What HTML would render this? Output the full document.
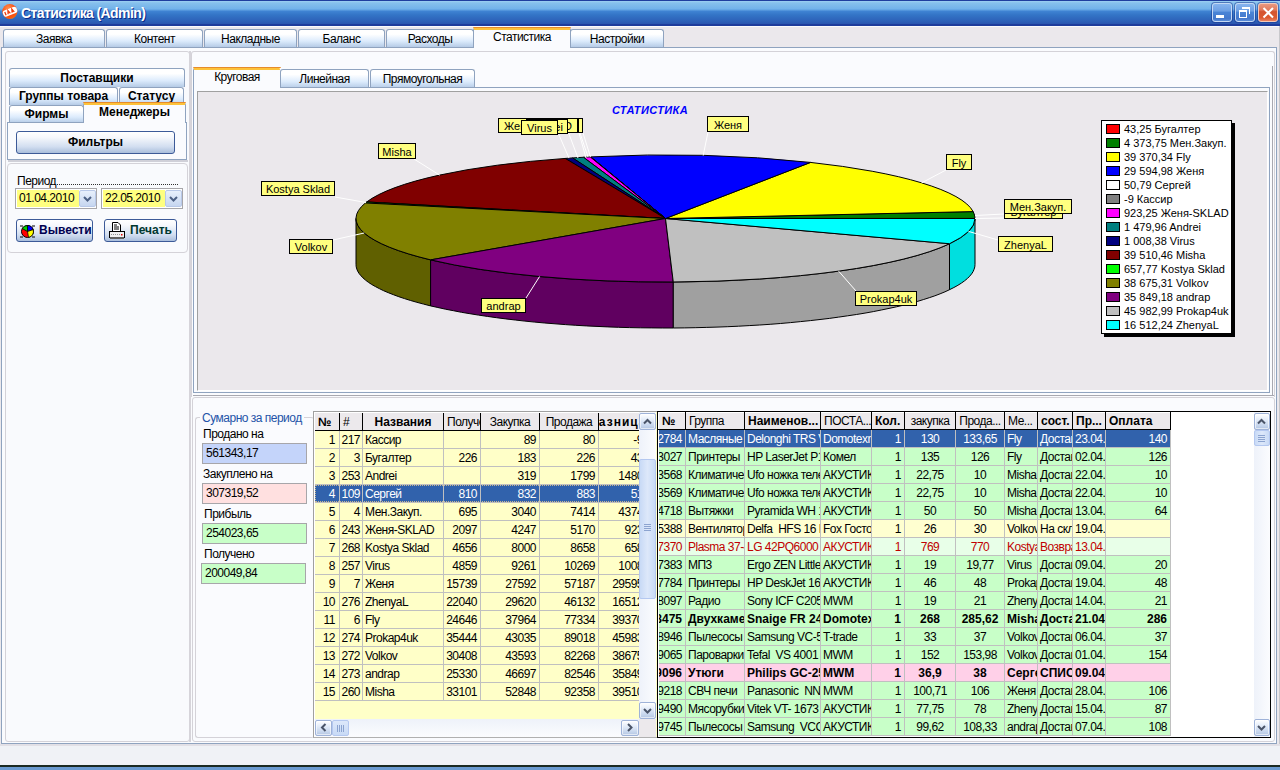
<!DOCTYPE html><html><head><meta charset="utf-8"><style>
html,body{margin:0;padding:0;}
body{width:1280px;height:770px;position:relative;overflow:hidden;background:#EBE8EC;font-family:"Liberation Sans", sans-serif;font-size:12px;letter-spacing:-0.5px;color:#000;}
svg{letter-spacing:0;}
div{box-sizing:border-box;}
.tab{position:absolute;border:1px solid #8FA3BF;border-bottom:none;border-radius:3px 3px 0 0;background:linear-gradient(#FFFFFF 0%,#FFFFFF 25%,#DCEBFC 65%,#B5CBE6 100%);text-align:center;font-size:12px;}
.stab{position:absolute;background:#FAFBFE;text-align:center;border-top:3px solid #FDC23A;border-radius:3px 3px 0 0;box-shadow:inset 0 0 0 0 #000;}
.stab::before{content:'';position:absolute;left:-1px;right:-1px;top:-3px;height:1px;background:#E68B2C;border-radius:3px 3px 0 0;}
.btn{position:absolute;letter-spacing:0;border:1px solid #3C5A98;border-radius:3px;background:linear-gradient(#FFFFFF 0%,#F6F8FC 25%,#D2DEF0 70%,#A9BEDC 100%);text-align:center;font-weight:bold;}
.cell{position:absolute;white-space:nowrap;overflow:hidden;}

</style></head><body>
<div style="position:absolute;left:0px;top:0px;width:1280px;height:26px;background:linear-gradient(#1F3E9E 0px,#1F3E9E 1px,#9DD0F2 1px,#86C0EC 3px,#72B2EA 9px,#5C9EE0 10px,#3E82D2 11.5px,#3374C6 15px,#2C5EB6 22px,#2A55AE 24px,#1E3C9C 24.5px,#1E3C9C 26px);"></div>
<svg style="position:absolute;left:0px;top:2px" width="20" height="20" viewBox="0 0 20 20"><defs><radialGradient id="ig" cx="0.4" cy="0.3" r="0.8"><stop offset="0" stop-color="#FF9050"/><stop offset="0.6" stop-color="#F84A10"/><stop offset="0.85" stop-color="#F86010"/><stop offset="1" stop-color="#FFC020"/></radialGradient></defs><circle cx="9.8" cy="9.5" r="7.6" fill="url(#ig)"/><g transform="rotate(-22 9.8 9.5)"><rect x="2.6" y="6.6" width="14.6" height="6.4" rx="2.5" fill="#FFFFFF"/><path d="M5 8 V11.5 M7.2 11.5 L8.4 8 L9.6 11.5 M11.5 11.5 L12.6 8 L13.8 11.5 M11.9 10.4 H13.4" stroke="#F03808" stroke-width="1.3" fill="none"/></g></svg>
<div style="position:absolute;left:21px;top:4px;text-align:left;white-space:nowrap;color:#fff;font-weight:bold;font-size:14px;line-height:18px;letter-spacing:-0.6px;text-shadow:1px 1px 0 #0A2A8A;">Статистика (Admin)</div>
<div style="position:absolute;left:1212px;top:3px;width:20px;height:19px;border-radius:3px;background:linear-gradient(#86B4EE 0%,#6EA0E4 40%,#4A84D6 50%,#4478CC 85%,#5A8CD8 100%);border:1px solid #C4D8F4;box-shadow:0 0 0 1px rgba(20,50,140,0.5);"><div style="position:absolute;left:3px;top:11px;width:8px;height:3px;background:#fff"></div></div>
<div style="position:absolute;left:1235px;top:3px;width:20px;height:19px;border-radius:3px;background:linear-gradient(#86B4EE 0%,#6EA0E4 40%,#4A84D6 50%,#4478CC 85%,#5A8CD8 100%);border:1px solid #C4D8F4;box-shadow:0 0 0 1px rgba(20,50,140,0.5);"><div style="position:absolute;left:6px;top:3px;width:8px;height:7px;border:1px solid #fff;border-top-width:2px;border-left:none;border-bottom:none;"></div><div style="position:absolute;left:3px;top:6px;width:8px;height:8px;border:1px solid #fff;border-top-width:2px;"></div></div>
<div style="position:absolute;left:1258px;top:3px;width:20px;height:19px;border-radius:3px;background:linear-gradient(#E89880 0%,#E07A5C 35%,#D45430 45%,#DC5A30 80%,#E88060 100%);border:1px solid #F4C8B8;box-shadow:0 0 0 1px rgba(20,50,140,0.5);"><svg width="18" height="17" style="position:absolute;left:0;top:0"><path d="M4.5 4 L14 13.5 M14 4 L4.5 13.5" stroke="#fff" stroke-width="2"/></svg></div>
<div style="position:absolute;left:0px;top:26px;width:1280px;height:1px;background:#FAFAFC;"></div>
<div style="position:absolute;left:1279px;top:26px;width:1px;height:744px;background:#C8C8CC;"></div>
<div class="tab" style="left:3px;top:29px;width:102px;height:18px;line-height:19px;">Заявка</div>
<div class="tab" style="left:106px;top:29px;width:97px;height:18px;line-height:19px;">Контент</div>
<div class="tab" style="left:204px;top:29px;width:93px;height:18px;line-height:19px;">Накладные</div>
<div class="tab" style="left:298px;top:29px;width:87px;height:18px;line-height:19px;">Баланс</div>
<div class="tab" style="left:386px;top:29px;width:88px;height:18px;line-height:19px;">Расходы</div>
<div class="stab" style="left:473px;top:27px;width:98px;height:21px;line-height:15px;border-left:1px solid #8FA3BF;border-right:1px solid #8FA3BF;">Статистика</div>
<div class="tab" style="left:570px;top:29px;width:94px;height:18px;line-height:19px;">Настройки</div>
<div style="position:absolute;left:1px;top:47px;width:1276px;height:697px;border:1px solid #8FA3BF;border-top:1px solid #8FA3BF;background:#FAFBFE;"></div>
<div style="position:absolute;left:474px;top:47px;width:96px;height:1px;background:#FAFBFE;"></div>
<div style="position:absolute;left:0px;top:744px;width:1280px;height:2px;background:#E2E0E6;"></div>
<div style="position:absolute;left:0px;top:746px;width:1280px;height:19px;background:#F0F2F6;"></div>
<div style="position:absolute;left:0px;top:765px;width:1280px;height:2px;background:#1A2A22;"></div>
<div style="position:absolute;left:0px;top:767px;width:1280px;height:3px;background:#6A9AD0;"></div>
<div style="position:absolute;left:5px;top:51px;width:185px;height:691px;border:1px solid #D4D2D8;border-radius:3px;background:#F9FAFD;"></div>
<div class="tab" style="left:9px;top:68px;width:176px;height:19px;line-height:18px;font-weight:bold;font-size:12px;letter-spacing:0;">Поставщики</div>
<div class="tab" style="left:9px;top:87px;width:109px;height:18px;line-height:17px;font-weight:bold;font-size:12px;letter-spacing:0;">Группы товара</div>
<div class="tab" style="left:119px;top:87px;width:65px;height:18px;line-height:17px;font-weight:bold;font-size:12px;letter-spacing:0;">Статусу</div>
<div class="tab" style="left:9px;top:105px;width:75px;height:18px;line-height:17px;font-weight:bold;font-size:12px;letter-spacing:0;">Фирмы</div>
<div style="position:absolute;left:7px;top:122px;width:180px;height:38px;border:1px solid #8FA3BF;border-top:1px solid #8FA3BF;background:#FAFBFE;"></div>
<div style="position:absolute;left:8px;top:160px;width:180px;height:2px;background:#D0D0D8;"></div>
<div class="stab" style="left:83px;top:102px;width:103px;height:21px;line-height:15px;font-weight:bold;font-size:12px;letter-spacing:0;border-left:1px solid #8FA3BF;border-right:1px solid #8FA3BF;">Менеджеры</div>
<div class="btn" style="left:16px;top:131px;width:159px;height:23px;line-height:21px;font-size:12px;">Фильтры</div>
<div style="position:absolute;left:7px;top:163px;width:181px;height:90px;border:1px solid #D4D2D8;border-radius:4px;"></div>
<div style="position:absolute;left:17px;top:174px;text-align:left;white-space:nowrap;font-size:12px;">Период</div>
<div style="position:absolute;left:57px;top:184px;width:121px;height:1px;border-top:1px dotted #303030;"></div>
<div style="position:absolute;left:15px;top:188px;width:82px;height:21px;border:1px solid #A7A6AA;background:#FFFFFF;"><div style="position:absolute;left:1px;top:1px;width:62px;height:17px;background:#FFFF80;"></div><div style="position:absolute;left:3px;top:2px;font-size:12px;line-height:15px;">01.04.2010</div><div style="position:absolute;left:63px;top:1px;width:17px;height:17px;border:1px solid #B8C8E8;border-radius:2px;background:linear-gradient(#E8F0FC,#C6D6F0);"><svg width="15" height="15" style="position:absolute;left:0;top:0"><path d="M4 6 L7.5 9.5 L11 6" stroke="#4D6185" stroke-width="2" fill="none"/></svg></div></div>
<div style="position:absolute;left:101px;top:188px;width:82px;height:21px;border:1px solid #A7A6AA;background:#FFFFFF;"><div style="position:absolute;left:1px;top:1px;width:62px;height:17px;background:#FFFF80;"></div><div style="position:absolute;left:3px;top:2px;font-size:12px;line-height:15px;">22.05.2010</div><div style="position:absolute;left:63px;top:1px;width:17px;height:17px;border:1px solid #B8C8E8;border-radius:2px;background:linear-gradient(#E8F0FC,#C6D6F0);"><svg width="15" height="15" style="position:absolute;left:0;top:0"><path d="M4 6 L7.5 9.5 L11 6" stroke="#4D6185" stroke-width="2" fill="none"/></svg></div></div>
<div class="btn" style="left:16px;top:219px;width:77px;height:23px;line-height:21px;font-size:12px;color:#000050;text-align:left;padding-left:22px;">Вывести</div>
<svg style="position:absolute;left:19px;top:224px" width="17" height="15" viewBox="0 0 17 15"><path d="M1 2 H4 M13 2 H16 M1 13 H4 M13 13 H16" stroke="#000" stroke-width="1"/><circle cx="8.5" cy="7.5" r="6" fill="#FF0000" stroke="#000" stroke-width="1"/><path d="M8.5 7.5 L8.5 1.5 A6 6 0 0 1 14.2 5.6 Z" fill="#0000FF" stroke="#000" stroke-width="0.8"/><path d="M8.5 7.5 L14.2 5.6 A6 6 0 0 1 9.5 13.4 Z" fill="#FFFF00" stroke="#000" stroke-width="0.8"/><path d="M8.5 7.5 L3.2 4.5 A6 6 0 0 1 8.5 1.5 Z" fill="#00D000" stroke="#000" stroke-width="0.8"/></svg>
<div class="btn" style="left:104px;top:219px;width:73px;height:23px;line-height:21px;font-size:12px;color:#003830;text-align:left;padding-left:25px;">Печать</div>
<svg style="position:absolute;left:108px;top:222px" width="18" height="18" viewBox="0 0 18 18"><path d="M4.5 0.5 H10 L12.5 3 V9.5 H4.5 Z" fill="#fff" stroke="#000"/><path d="M6 3 H9 M6 5 H11 M6 7 H11" stroke="#000"/><rect x="1.5" y="9.5" width="15" height="6" fill="#F0F0F0" stroke="#000"/><path d="M3 12.5 H15" stroke="#909090" stroke-dasharray="1 1"/><rect x="13" y="12" width="1.5" height="1.5" fill="#E00000"/><rect x="2" y="15" width="14" height="2" fill="#606060"/></svg>
<div style="position:absolute;left:189px;top:51px;width:2px;height:691px;background:#D6D4DA;"></div>
<div style="position:absolute;left:191px;top:51px;width:1084px;height:346px;border:1px solid #D4D2D8;border-bottom:none;border-radius:3px 3px 0 0;"></div>
<div class="tab" style="left:280px;top:69px;width:89px;height:19px;line-height:18px;">Линейная</div>
<div class="tab" style="left:370px;top:69px;width:105px;height:19px;line-height:18px;">Прямоугольная</div>
<div style="position:absolute;left:193px;top:87px;width:1077px;height:306px;border:1px solid #8FA3BF;background:#FAFBFE;"></div>
<div style="position:absolute;left:1272px;top:66px;width:1px;height:330px;background:#A8A8B0;"></div>
<div style="position:absolute;left:193px;top:395px;width:1081px;height:1px;background:#A8A8B0;"></div>
<div class="stab" style="left:193px;top:67px;width:87px;height:21px;line-height:14px;border-left:1px solid #8FA3BF;">Круговая</div>
<div style="position:absolute;left:197px;top:91px;width:1071px;height:300px;border-top:1px solid #A0A0A0;border-left:1px solid #A0A0A0;border-right:1px solid #FFFFFF;border-bottom:1px solid #FFFFFF;background:#EBE8EC;"></div>
<svg style="position:absolute;left:0;top:0" width="1280" height="400" viewBox="0 0 1280 400"><text x="650" y="114" font-family="Liberation Sans" font-size="11" font-weight="bold" font-style="italic" fill="#0000FF" text-anchor="middle" letter-spacing="0.4">СТАТИСТИКА</text><path d="M356.0 218.5 L356.2 220.8 L356.8 223.0 L357.7 225.2 L359.1 227.5 L360.9 229.7 L363.0 231.9 L365.5 234.1 L368.4 236.3 L371.6 238.4 L375.3 240.5 L379.3 242.6 L383.6 244.7 L388.3 246.7 L393.4 248.7 L398.8 250.7 L404.5 252.6 L410.6 254.5 L416.9 256.3 L423.6 258.1 L430.6 259.9 L430.6 305.9 L423.6 304.1 L416.9 302.3 L410.6 300.5 L404.5 298.6 L398.8 296.7 L393.4 294.7 L388.3 292.7 L383.6 290.7 L379.3 288.6 L375.3 286.5 L371.6 284.4 L368.4 282.3 L365.5 280.1 L363.0 277.9 L360.9 275.7 L359.1 273.5 L357.7 271.2 L356.8 269.0 L356.2 266.8 L356.0 264.5 Z" fill="#606000" stroke="#000" stroke-width="1"/><path d="M430.6 259.9 L437.9 261.5 L445.5 263.2 L453.4 264.7 L461.5 266.3 L469.9 267.7 L478.5 269.1 L487.4 270.4 L496.5 271.7 L505.8 272.9 L515.3 274.0 L524.9 275.1 L534.8 276.1 L544.8 277.0 L555.0 277.8 L565.3 278.6 L575.8 279.3 L586.3 279.9 L597.0 280.4 L607.8 280.9 L618.6 281.3 L629.4 281.6 L640.4 281.8 L651.3 281.9 L662.3 282.0 L673.3 282.0 L673.3 328.0 L662.3 328.0 L651.3 327.9 L640.4 327.8 L629.4 327.6 L618.6 327.3 L607.8 326.9 L597.0 326.4 L586.3 325.9 L575.8 325.3 L565.3 324.6 L555.0 323.8 L544.8 323.0 L534.8 322.1 L524.9 321.1 L515.3 320.0 L505.8 318.9 L496.5 317.7 L487.4 316.4 L478.5 315.1 L469.9 313.7 L461.5 312.3 L453.4 310.7 L445.5 309.2 L437.9 307.5 L430.6 305.9 Z" fill="#600060" stroke="#000" stroke-width="1"/><path d="M673.3 282.0 L684.3 281.9 L695.2 281.7 L706.2 281.4 L717.0 281.1 L727.8 280.7 L738.6 280.2 L749.2 279.6 L759.7 279.0 L770.2 278.3 L780.4 277.5 L790.6 276.6 L800.6 275.6 L810.4 274.6 L820.0 273.5 L829.4 272.4 L838.7 271.1 L847.7 269.8 L856.4 268.5 L865.0 267.1 L873.3 265.6 L881.3 264.0 L889.0 262.4 L896.5 260.8 L903.7 259.1 L910.5 257.3 L917.1 255.5 L923.3 253.6 L929.3 251.7 L934.9 249.8 L940.1 247.8 L945.0 245.8 L949.5 243.7 L949.5 289.7 L945.0 291.8 L940.1 293.8 L934.9 295.8 L929.3 297.7 L923.3 299.6 L917.1 301.5 L910.5 303.3 L903.7 305.1 L896.5 306.8 L889.0 308.4 L881.3 310.0 L873.3 311.6 L865.0 313.1 L856.4 314.5 L847.7 315.8 L838.7 317.1 L829.4 318.4 L820.0 319.5 L810.4 320.6 L800.6 321.6 L790.6 322.6 L780.4 323.5 L770.2 324.3 L759.7 325.0 L749.2 325.6 L738.6 326.2 L727.8 326.7 L717.0 327.1 L706.2 327.4 L695.2 327.7 L684.3 327.9 L673.3 328.0 Z" fill="#A0A0A0" stroke="#000" stroke-width="1"/><path d="M949.5 243.7 L953.9 241.5 L957.9 239.3 L961.4 237.1 L964.6 234.8 L967.4 232.5 L969.7 230.2 L971.6 227.9 L973.1 225.6 L974.1 223.2 L974.8 220.9 L975.0 218.5 L975.0 264.5 L974.8 266.9 L974.1 269.2 L973.1 271.6 L971.6 273.9 L969.7 276.2 L967.4 278.5 L964.6 280.8 L961.4 283.1 L957.9 285.3 L953.9 287.5 L949.5 289.7 Z" fill="#00DFDF" stroke="#000" stroke-width="1"/><path d="M665.5 218.5 L975.00 218.50 A309.5 63.5 0 0 0 975.00 218.43 Z" fill="#FF0000" stroke="#000" stroke-width="1" stroke-linejoin="bevel"/><path d="M665.5 218.5 L975.00 218.43 A309.5 63.5 0 0 0 973.15 211.58 Z" fill="#008000" stroke="#000" stroke-width="1" stroke-linejoin="bevel"/><path d="M665.5 218.5 L973.15 211.58 A309.5 63.5 0 0 0 810.56 162.41 Z" fill="#FFFF00" stroke="#000" stroke-width="1" stroke-linejoin="bevel"/><path d="M665.5 218.5 L810.56 162.41 A309.5 63.5 0 0 0 590.68 156.88 Z" fill="#0000FF" stroke="#000" stroke-width="1" stroke-linejoin="bevel"/><path d="M665.5 218.5 L590.68 156.88 A309.5 63.5 0 0 0 590.30 156.90 Z" fill="#FFFFFF" stroke="#000" stroke-width="1" stroke-linejoin="bevel"/><path d="M665.5 218.5 L590.30 156.90 A309.5 63.5 0 0 0 590.24 156.91 Z" fill="#808080" stroke="#000" stroke-width="1" stroke-linejoin="bevel"/><path d="M665.5 218.5 L590.24 156.91 A309.5 63.5 0 0 0 583.40 157.27 Z" fill="#FF00FF" stroke="#000" stroke-width="1" stroke-linejoin="bevel"/><path d="M665.5 218.5 L583.40 157.27 A309.5 63.5 0 0 0 572.54 157.93 Z" fill="#008080" stroke="#000" stroke-width="1" stroke-linejoin="bevel"/><path d="M665.5 218.5 L572.54 157.93 A309.5 63.5 0 0 0 565.20 158.43 Z" fill="#000080" stroke="#000" stroke-width="1" stroke-linejoin="bevel"/><path d="M665.5 218.5 L565.20 158.43 A309.5 63.5 0 0 0 366.69 201.96 Z" fill="#800000" stroke="#000" stroke-width="1" stroke-linejoin="bevel"/><path d="M665.5 218.5 L366.69 201.96 A309.5 63.5 0 0 0 365.42 202.96 Z" fill="#00FF00" stroke="#000" stroke-width="1" stroke-linejoin="bevel"/><path d="M665.5 218.5 L365.42 202.96 A309.5 63.5 0 0 0 430.64 259.86 Z" fill="#808000" stroke="#000" stroke-width="1" stroke-linejoin="bevel"/><path d="M665.5 218.5 L430.64 259.86 A309.5 63.5 0 0 0 673.27 281.98 Z" fill="#800080" stroke="#000" stroke-width="1" stroke-linejoin="bevel"/><path d="M665.5 218.5 L673.27 281.98 A309.5 63.5 0 0 0 949.55 243.72 Z" fill="#C0C0C0" stroke="#000" stroke-width="1" stroke-linejoin="bevel"/><path d="M665.5 218.5 L949.55 243.72 A309.5 63.5 0 0 0 975.00 218.50 Z" fill="#00FFFF" stroke="#000" stroke-width="1" stroke-linejoin="bevel"/><line x1="975" y1="218.5" x2="1004" y2="218" stroke="#FFFFFF" stroke-width="1"/><line x1="975" y1="215.5" x2="1004" y2="214" stroke="#FFFFFF" stroke-width="1"/><line x1="921.6" y1="182.9" x2="946" y2="170" stroke="#FFFFFF" stroke-width="1"/><line x1="703.2" y1="155.5" x2="708" y2="132" stroke="#FFFFFF" stroke-width="1"/><line x1="590.5" y1="157" x2="583" y2="133" stroke="#FFFFFF" stroke-width="1"/><line x1="588" y1="157" x2="580" y2="133" stroke="#FFFFFF" stroke-width="1"/><line x1="586" y1="158" x2="579" y2="133" stroke="#FFFFFF" stroke-width="1"/><line x1="578" y1="158" x2="569" y2="134" stroke="#FFFFFF" stroke-width="1"/><line x1="569" y1="158" x2="559" y2="135" stroke="#FFFFFF" stroke-width="1"/><line x1="439.6" y1="175.1" x2="414" y2="159" stroke="#FFFFFF" stroke-width="1"/><line x1="366" y1="202.5" x2="335" y2="197" stroke="#FFFFFF" stroke-width="1"/><line x1="364.2" y1="233" x2="333" y2="240" stroke="#FFFFFF" stroke-width="1"/><line x1="539.6" y1="276.5" x2="526" y2="298" stroke="#FFFFFF" stroke-width="1"/><line x1="838.6" y1="271.1" x2="856" y2="291" stroke="#FFFFFF" stroke-width="1"/><line x1="968.5" y1="231.4" x2="998" y2="240" stroke="#FFFFFF" stroke-width="1"/><rect x="1004.5" y="205.5" width="58" height="13" fill="#FFFF80" stroke="#000" stroke-width="1"/><text x="1033.5" y="215.5" font-family="Liberation Sans" font-size="11" text-anchor="middle" fill="#000">Бугалтер</text><rect x="1004.5" y="199.5" width="67" height="14" fill="#FFFF80" stroke="#000" stroke-width="1"/><text x="1038.0" y="210.5" font-family="Liberation Sans" font-size="11" text-anchor="middle" fill="#000">Мен.Закуп.</text><rect x="946.5" y="154.5" width="25" height="15" fill="#FFFF80" stroke="#000" stroke-width="1"/><text x="959.0" y="166.5" font-family="Liberation Sans" font-size="11" text-anchor="middle" fill="#000">Fly</text><rect x="707.5" y="116.5" width="41" height="15" fill="#FFFF80" stroke="#000" stroke-width="1"/><text x="728.0" y="128.5" font-family="Liberation Sans" font-size="11" text-anchor="middle" fill="#000">Женя</text><rect x="537.5" y="118.5" width="45" height="14" fill="#FFFF80" stroke="#000" stroke-width="1"/><text x="560.0" y="129.5" font-family="Liberation Sans" font-size="11" text-anchor="middle" fill="#000">Сергей</text><rect x="535.5" y="118.5" width="43" height="14" fill="#FFFF80" stroke="#000" stroke-width="1"/><text x="557.0" y="129.5" font-family="Liberation Sans" font-size="11" text-anchor="middle" fill="#000">Кассир</text><rect x="498.5" y="118.5" width="79" height="14" fill="#FFFF80" stroke="#000" stroke-width="1"/><text x="538.0" y="129.5" font-family="Liberation Sans" font-size="11" text-anchor="middle" fill="#000">Женя-SKLAD</text><rect x="526.5" y="119.5" width="41" height="14" fill="#FFFF80" stroke="#000" stroke-width="1"/><text x="547.0" y="130.5" font-family="Liberation Sans" font-size="11" text-anchor="middle" fill="#000">Andrei</text><rect x="521.5" y="120.5" width="36" height="14" fill="#FFFF80" stroke="#000" stroke-width="1"/><text x="539.5" y="131.5" font-family="Liberation Sans" font-size="11" text-anchor="middle" fill="#000">Virus</text><rect x="378.5" y="143.5" width="37" height="15" fill="#FFFF80" stroke="#000" stroke-width="1"/><text x="397.0" y="155.5" font-family="Liberation Sans" font-size="11" text-anchor="middle" fill="#000">Misha</text><rect x="261.5" y="181.5" width="73" height="14" fill="#FFFF80" stroke="#000" stroke-width="1"/><text x="298.0" y="192.5" font-family="Liberation Sans" font-size="11" text-anchor="middle" fill="#000">Kostya Sklad</text><rect x="289.5" y="239.5" width="43" height="14" fill="#FFFF80" stroke="#000" stroke-width="1"/><text x="311.0" y="250.5" font-family="Liberation Sans" font-size="11" text-anchor="middle" fill="#000">Volkov</text><rect x="481.5" y="298.5" width="44" height="14" fill="#FFFF80" stroke="#000" stroke-width="1"/><text x="503.5" y="309.5" font-family="Liberation Sans" font-size="11" text-anchor="middle" fill="#000">andrap</text><rect x="855.5" y="291.5" width="61" height="14" fill="#FFFF80" stroke="#000" stroke-width="1"/><text x="886.0" y="302.5" font-family="Liberation Sans" font-size="11" text-anchor="middle" fill="#000">Prokap4uk</text><rect x="998.5" y="236.5" width="54" height="15" fill="#FFFF80" stroke="#000" stroke-width="1"/><text x="1025.5" y="248.5" font-family="Liberation Sans" font-size="11" text-anchor="middle" fill="#000">ZhenyaL</text><rect x="1104" y="123" width="131" height="214" fill="#000"/><rect x="1101.5" y="120.5" width="130" height="213" fill="#FFFFFF" stroke="#000" stroke-width="1"/><rect x="1106.5" y="124.5" width="13" height="9" fill="#FF0000" stroke="#000" stroke-width="1"/><text x="1124" y="133" font-family="Liberation Sans" font-size="11" fill="#000">43,25 Бугалтер</text><rect x="1106.5" y="138.5" width="13" height="9" fill="#008000" stroke="#000" stroke-width="1"/><text x="1124" y="147" font-family="Liberation Sans" font-size="11" fill="#000">4 373,75 Мен.Закуп.</text><rect x="1106.5" y="152.5" width="13" height="9" fill="#FFFF00" stroke="#000" stroke-width="1"/><text x="1124" y="161" font-family="Liberation Sans" font-size="11" fill="#000">39 370,34 Fly</text><rect x="1106.5" y="166.5" width="13" height="9" fill="#0000FF" stroke="#000" stroke-width="1"/><text x="1124" y="175" font-family="Liberation Sans" font-size="11" fill="#000">29 594,98 Женя</text><rect x="1106.5" y="180.5" width="13" height="9" fill="#FFFFFF" stroke="#000" stroke-width="1"/><text x="1124" y="189" font-family="Liberation Sans" font-size="11" fill="#000">50,79 Сергей</text><rect x="1106.5" y="194.5" width="13" height="9" fill="#808080" stroke="#000" stroke-width="1"/><text x="1124" y="203" font-family="Liberation Sans" font-size="11" fill="#000">-9 Кассир</text><rect x="1106.5" y="208.5" width="13" height="9" fill="#FF00FF" stroke="#000" stroke-width="1"/><text x="1124" y="217" font-family="Liberation Sans" font-size="11" fill="#000">923,25 Женя-SKLAD</text><rect x="1106.5" y="222.5" width="13" height="9" fill="#008080" stroke="#000" stroke-width="1"/><text x="1124" y="231" font-family="Liberation Sans" font-size="11" fill="#000">1 479,96 Andrei</text><rect x="1106.5" y="236.5" width="13" height="9" fill="#000080" stroke="#000" stroke-width="1"/><text x="1124" y="245" font-family="Liberation Sans" font-size="11" fill="#000">1 008,38 Virus</text><rect x="1106.5" y="250.5" width="13" height="9" fill="#800000" stroke="#000" stroke-width="1"/><text x="1124" y="259" font-family="Liberation Sans" font-size="11" fill="#000">39 510,46 Misha</text><rect x="1106.5" y="264.5" width="13" height="9" fill="#00FF00" stroke="#000" stroke-width="1"/><text x="1124" y="273" font-family="Liberation Sans" font-size="11" fill="#000">657,77 Kostya Sklad</text><rect x="1106.5" y="278.5" width="13" height="9" fill="#808000" stroke="#000" stroke-width="1"/><text x="1124" y="287" font-family="Liberation Sans" font-size="11" fill="#000">38 675,31 Volkov</text><rect x="1106.5" y="292.5" width="13" height="9" fill="#800080" stroke="#000" stroke-width="1"/><text x="1124" y="301" font-family="Liberation Sans" font-size="11" fill="#000">35 849,18 andrap</text><rect x="1106.5" y="306.5" width="13" height="9" fill="#C0C0C0" stroke="#000" stroke-width="1"/><text x="1124" y="315" font-family="Liberation Sans" font-size="11" fill="#000">45 982,99 Prokap4uk</text><rect x="1106.5" y="320.5" width="13" height="9" fill="#00FFFF" stroke="#000" stroke-width="1"/><text x="1124" y="329" font-family="Liberation Sans" font-size="11" fill="#000">16 512,24 ZhenyaL</text></svg>
<div style="position:absolute;left:192px;top:397px;width:1083px;height:345px;border:1px solid #D4D2D8;border-radius:3px;"></div>
<div style="position:absolute;left:195px;top:417px;width:119px;height:321px;border:1px solid #D4D2D8;border-radius:3px;border-right:none;"></div>
<div style="position:absolute;left:200px;top:411px;text-align:left;white-space:nowrap;color:#2353A8;background:#F9FAFD;font-size:12px;line-height:14px;padding:0 2px 0 2px;">Сумарно за период</div>
<div style="position:absolute;left:203px;top:427px;text-align:left;white-space:nowrap;font-size:12px;line-height:14px;">Продано на</div>
<div style="position:absolute;left:202px;top:443px;width:105px;height:21px;border:1px solid #A7A6AA;background:#C4D4FA;font-size:12px;line-height:19px;padding-left:3px;">561343,17</div>
<div style="position:absolute;left:203px;top:467px;text-align:left;white-space:nowrap;font-size:12px;line-height:14px;">Закуплено на</div>
<div style="position:absolute;left:202px;top:483px;width:105px;height:21px;border:1px solid #A7A6AA;background:#FFE0E0;font-size:12px;line-height:19px;padding-left:3px;">307319,52</div>
<div style="position:absolute;left:204px;top:507px;text-align:left;white-space:nowrap;font-size:12px;line-height:14px;">Прибыль</div>
<div style="position:absolute;left:202px;top:523px;width:105px;height:21px;border:1px solid #A7A6AA;background:#C8FFC8;font-size:12px;line-height:19px;padding-left:3px;">254023,65</div>
<div style="position:absolute;left:204px;top:547px;text-align:left;white-space:nowrap;font-size:12px;line-height:14px;">Получено</div>
<div style="position:absolute;left:201px;top:563px;width:105px;height:21px;border:1px solid #A7A6AA;background:#C8FFC8;font-size:12px;line-height:19px;padding-left:3px;">200049,84</div>
<div style="position:absolute;left:313px;top:411px;width:344px;height:327px;border-top:1px solid #A0A0A0;border-left:1px solid #A0A0A0;border-bottom:1px solid #B0B0B0;background:#FFFFC8;"></div>
<div style="position:absolute;left:314px;top:412px;width:1px;height:325px;background:#FFFFFF;"></div>
<div style="position:absolute;left:315px;top:412px;width:324px;height:1px;background:#FFFFFF;"></div>
<div style="position:absolute;left:315px;top:413px;width:324px;height:306px;overflow:hidden;"><div style="position:absolute;left:0;top:0;width:340px;height:17px;background:#ECE9EC;"></div><div style="position:absolute;left:0;top:17px;width:340px;height:1px;background:#000;"></div><div class="cell" style="left:0px;top:0;width:24px;height:17px;line-height:19px;font-weight:bold;letter-spacing:0;text-align:left;padding-left:3px;">№</div><div class="cell" style="left:25px;top:0;width:22px;height:17px;line-height:19px;font-weight:normal;letter-spacing:-0.5px;text-align:left;padding-left:3px;">#</div><div style="position:absolute;left:24px;top:0;width:1px;height:17px;background:#000;"></div><div class="cell" style="left:48px;top:0;width:80px;height:17px;line-height:19px;font-weight:bold;letter-spacing:0;text-align:center;">Названия</div><div style="position:absolute;left:47px;top:0;width:1px;height:17px;background:#000;"></div><div class="cell" style="left:129px;top:0;width:36px;height:17px;line-height:19px;font-weight:normal;letter-spacing:-0.5px;text-align:left;padding-left:3px;">Получено</div><div style="position:absolute;left:128px;top:0;width:1px;height:17px;background:#000;"></div><div class="cell" style="left:166px;top:0;width:58px;height:17px;line-height:19px;font-weight:normal;letter-spacing:-0.5px;text-align:center;">Закупка</div><div style="position:absolute;left:165px;top:0;width:1px;height:17px;background:#000;"></div><div class="cell" style="left:225px;top:0;width:58px;height:17px;line-height:19px;font-weight:normal;letter-spacing:-0.5px;text-align:center;">Продажа</div><div style="position:absolute;left:224px;top:0;width:1px;height:17px;background:#000;"></div><div class="cell" style="left:284px;top:0;width:47px;height:17px;line-height:19px;font-weight:bold;letter-spacing:0;"><span style="position:absolute;left:-9px;top:0;letter-spacing:1px">Разница</span></div><div style="position:absolute;left:283px;top:0;width:1px;height:17px;background:#000;"></div><div style="position:absolute;left:0;top:35px;width:340px;height:1px;background:#C0C0C0;"></div><div class="cell" style="left:0px;top:18px;width:24px;height:17px;line-height:19px;color:#000;"><span style="position:absolute;right:4px;top:0">1</span></div><div class="cell" style="left:25px;top:18px;width:22px;height:17px;line-height:19px;color:#000;"><span style="position:absolute;right:2px;top:0">217</span></div><div class="cell" style="left:48px;top:18px;width:80px;height:17px;line-height:19px;color:#000;padding-left:2px;">Кассир</div><div class="cell" style="left:129px;top:18px;width:36px;height:17px;line-height:19px;color:#000;"><span style="position:absolute;right:3px;top:0"></span></div><div class="cell" style="left:166px;top:18px;width:58px;height:17px;line-height:19px;color:#000;"><span style="position:absolute;right:3px;top:0">89</span></div><div class="cell" style="left:225px;top:18px;width:58px;height:17px;line-height:19px;color:#000;"><span style="position:absolute;right:3px;top:0">80</span></div><div class="cell" style="left:284px;top:18px;width:47px;height:17px;line-height:19px;color:#000;"><span style="position:absolute;right:3px;top:0">-9</span></div><div style="position:absolute;left:0;top:53px;width:340px;height:1px;background:#C0C0C0;"></div><div class="cell" style="left:0px;top:36px;width:24px;height:17px;line-height:19px;color:#000;"><span style="position:absolute;right:4px;top:0">2</span></div><div class="cell" style="left:25px;top:36px;width:22px;height:17px;line-height:19px;color:#000;"><span style="position:absolute;right:2px;top:0">3</span></div><div class="cell" style="left:48px;top:36px;width:80px;height:17px;line-height:19px;color:#000;padding-left:2px;">Бугалтер</div><div class="cell" style="left:129px;top:36px;width:36px;height:17px;line-height:19px;color:#000;"><span style="position:absolute;right:3px;top:0">226</span></div><div class="cell" style="left:166px;top:36px;width:58px;height:17px;line-height:19px;color:#000;"><span style="position:absolute;right:3px;top:0">183</span></div><div class="cell" style="left:225px;top:36px;width:58px;height:17px;line-height:19px;color:#000;"><span style="position:absolute;right:3px;top:0">226</span></div><div class="cell" style="left:284px;top:36px;width:47px;height:17px;line-height:19px;color:#000;"><span style="position:absolute;right:3px;top:0">43</span></div><div style="position:absolute;left:0;top:71px;width:340px;height:1px;background:#C0C0C0;"></div><div class="cell" style="left:0px;top:54px;width:24px;height:17px;line-height:19px;color:#000;"><span style="position:absolute;right:4px;top:0">3</span></div><div class="cell" style="left:25px;top:54px;width:22px;height:17px;line-height:19px;color:#000;"><span style="position:absolute;right:2px;top:0">253</span></div><div class="cell" style="left:48px;top:54px;width:80px;height:17px;line-height:19px;color:#000;padding-left:2px;">Andrei</div><div class="cell" style="left:129px;top:54px;width:36px;height:17px;line-height:19px;color:#000;"><span style="position:absolute;right:3px;top:0"></span></div><div class="cell" style="left:166px;top:54px;width:58px;height:17px;line-height:19px;color:#000;"><span style="position:absolute;right:3px;top:0">319</span></div><div class="cell" style="left:225px;top:54px;width:58px;height:17px;line-height:19px;color:#000;"><span style="position:absolute;right:3px;top:0">1799</span></div><div class="cell" style="left:284px;top:54px;width:47px;height:17px;line-height:19px;color:#000;"><span style="position:absolute;right:3px;top:0">1480</span></div><div style="position:absolute;left:0;top:72px;width:340px;height:17px;background:#3162AC;"></div><div style="position:absolute;left:0;top:72px;width:340px;height:17px;border:1px dotted #C8B890;"></div><div style="position:absolute;left:0;top:89px;width:340px;height:1px;background:#C0C0C0;"></div><div class="cell" style="left:0px;top:72px;width:24px;height:17px;line-height:19px;color:#FFFFFF;"><span style="position:absolute;right:4px;top:0">4</span></div><div class="cell" style="left:25px;top:72px;width:22px;height:17px;line-height:19px;color:#FFFFFF;"><span style="position:absolute;right:2px;top:0">109</span></div><div class="cell" style="left:48px;top:72px;width:80px;height:17px;line-height:19px;color:#FFFFFF;padding-left:2px;">Сергей</div><div class="cell" style="left:129px;top:72px;width:36px;height:17px;line-height:19px;color:#FFFFFF;"><span style="position:absolute;right:3px;top:0">810</span></div><div class="cell" style="left:166px;top:72px;width:58px;height:17px;line-height:19px;color:#FFFFFF;"><span style="position:absolute;right:3px;top:0">832</span></div><div class="cell" style="left:225px;top:72px;width:58px;height:17px;line-height:19px;color:#FFFFFF;"><span style="position:absolute;right:3px;top:0">883</span></div><div class="cell" style="left:284px;top:72px;width:47px;height:17px;line-height:19px;color:#FFFFFF;"><span style="position:absolute;right:3px;top:0">51</span></div><div style="position:absolute;left:0;top:107px;width:340px;height:1px;background:#C0C0C0;"></div><div class="cell" style="left:0px;top:90px;width:24px;height:17px;line-height:19px;color:#000;"><span style="position:absolute;right:4px;top:0">5</span></div><div class="cell" style="left:25px;top:90px;width:22px;height:17px;line-height:19px;color:#000;"><span style="position:absolute;right:2px;top:0">4</span></div><div class="cell" style="left:48px;top:90px;width:80px;height:17px;line-height:19px;color:#000;padding-left:2px;">Мен.Закуп.</div><div class="cell" style="left:129px;top:90px;width:36px;height:17px;line-height:19px;color:#000;"><span style="position:absolute;right:3px;top:0">695</span></div><div class="cell" style="left:166px;top:90px;width:58px;height:17px;line-height:19px;color:#000;"><span style="position:absolute;right:3px;top:0">3040</span></div><div class="cell" style="left:225px;top:90px;width:58px;height:17px;line-height:19px;color:#000;"><span style="position:absolute;right:3px;top:0">7414</span></div><div class="cell" style="left:284px;top:90px;width:47px;height:17px;line-height:19px;color:#000;"><span style="position:absolute;right:3px;top:0">4374</span></div><div style="position:absolute;left:0;top:125px;width:340px;height:1px;background:#C0C0C0;"></div><div class="cell" style="left:0px;top:108px;width:24px;height:17px;line-height:19px;color:#000;"><span style="position:absolute;right:4px;top:0">6</span></div><div class="cell" style="left:25px;top:108px;width:22px;height:17px;line-height:19px;color:#000;"><span style="position:absolute;right:2px;top:0">243</span></div><div class="cell" style="left:48px;top:108px;width:80px;height:17px;line-height:19px;color:#000;padding-left:2px;">Женя-SKLAD</div><div class="cell" style="left:129px;top:108px;width:36px;height:17px;line-height:19px;color:#000;"><span style="position:absolute;right:3px;top:0">2097</span></div><div class="cell" style="left:166px;top:108px;width:58px;height:17px;line-height:19px;color:#000;"><span style="position:absolute;right:3px;top:0">4247</span></div><div class="cell" style="left:225px;top:108px;width:58px;height:17px;line-height:19px;color:#000;"><span style="position:absolute;right:3px;top:0">5170</span></div><div class="cell" style="left:284px;top:108px;width:47px;height:17px;line-height:19px;color:#000;"><span style="position:absolute;right:3px;top:0">923</span></div><div style="position:absolute;left:0;top:143px;width:340px;height:1px;background:#C0C0C0;"></div><div class="cell" style="left:0px;top:126px;width:24px;height:17px;line-height:19px;color:#000;"><span style="position:absolute;right:4px;top:0">7</span></div><div class="cell" style="left:25px;top:126px;width:22px;height:17px;line-height:19px;color:#000;"><span style="position:absolute;right:2px;top:0">268</span></div><div class="cell" style="left:48px;top:126px;width:80px;height:17px;line-height:19px;color:#000;padding-left:2px;">Kostya Sklad</div><div class="cell" style="left:129px;top:126px;width:36px;height:17px;line-height:19px;color:#000;"><span style="position:absolute;right:3px;top:0">4656</span></div><div class="cell" style="left:166px;top:126px;width:58px;height:17px;line-height:19px;color:#000;"><span style="position:absolute;right:3px;top:0">8000</span></div><div class="cell" style="left:225px;top:126px;width:58px;height:17px;line-height:19px;color:#000;"><span style="position:absolute;right:3px;top:0">8658</span></div><div class="cell" style="left:284px;top:126px;width:47px;height:17px;line-height:19px;color:#000;"><span style="position:absolute;right:3px;top:0">658</span></div><div style="position:absolute;left:0;top:161px;width:340px;height:1px;background:#C0C0C0;"></div><div class="cell" style="left:0px;top:144px;width:24px;height:17px;line-height:19px;color:#000;"><span style="position:absolute;right:4px;top:0">8</span></div><div class="cell" style="left:25px;top:144px;width:22px;height:17px;line-height:19px;color:#000;"><span style="position:absolute;right:2px;top:0">257</span></div><div class="cell" style="left:48px;top:144px;width:80px;height:17px;line-height:19px;color:#000;padding-left:2px;">Virus</div><div class="cell" style="left:129px;top:144px;width:36px;height:17px;line-height:19px;color:#000;"><span style="position:absolute;right:3px;top:0">4859</span></div><div class="cell" style="left:166px;top:144px;width:58px;height:17px;line-height:19px;color:#000;"><span style="position:absolute;right:3px;top:0">9261</span></div><div class="cell" style="left:225px;top:144px;width:58px;height:17px;line-height:19px;color:#000;"><span style="position:absolute;right:3px;top:0">10269</span></div><div class="cell" style="left:284px;top:144px;width:47px;height:17px;line-height:19px;color:#000;"><span style="position:absolute;right:3px;top:0">1008</span></div><div style="position:absolute;left:0;top:179px;width:340px;height:1px;background:#C0C0C0;"></div><div class="cell" style="left:0px;top:162px;width:24px;height:17px;line-height:19px;color:#000;"><span style="position:absolute;right:4px;top:0">9</span></div><div class="cell" style="left:25px;top:162px;width:22px;height:17px;line-height:19px;color:#000;"><span style="position:absolute;right:2px;top:0">7</span></div><div class="cell" style="left:48px;top:162px;width:80px;height:17px;line-height:19px;color:#000;padding-left:2px;">Женя</div><div class="cell" style="left:129px;top:162px;width:36px;height:17px;line-height:19px;color:#000;"><span style="position:absolute;right:3px;top:0">15739</span></div><div class="cell" style="left:166px;top:162px;width:58px;height:17px;line-height:19px;color:#000;"><span style="position:absolute;right:3px;top:0">27592</span></div><div class="cell" style="left:225px;top:162px;width:58px;height:17px;line-height:19px;color:#000;"><span style="position:absolute;right:3px;top:0">57187</span></div><div class="cell" style="left:284px;top:162px;width:47px;height:17px;line-height:19px;color:#000;"><span style="position:absolute;right:3px;top:0">29595</span></div><div style="position:absolute;left:0;top:197px;width:340px;height:1px;background:#C0C0C0;"></div><div class="cell" style="left:0px;top:180px;width:24px;height:17px;line-height:19px;color:#000;"><span style="position:absolute;right:4px;top:0">10</span></div><div class="cell" style="left:25px;top:180px;width:22px;height:17px;line-height:19px;color:#000;"><span style="position:absolute;right:2px;top:0">276</span></div><div class="cell" style="left:48px;top:180px;width:80px;height:17px;line-height:19px;color:#000;padding-left:2px;">ZhenyaL</div><div class="cell" style="left:129px;top:180px;width:36px;height:17px;line-height:19px;color:#000;"><span style="position:absolute;right:3px;top:0">22040</span></div><div class="cell" style="left:166px;top:180px;width:58px;height:17px;line-height:19px;color:#000;"><span style="position:absolute;right:3px;top:0">29620</span></div><div class="cell" style="left:225px;top:180px;width:58px;height:17px;line-height:19px;color:#000;"><span style="position:absolute;right:3px;top:0">46132</span></div><div class="cell" style="left:284px;top:180px;width:47px;height:17px;line-height:19px;color:#000;"><span style="position:absolute;right:3px;top:0">16512</span></div><div style="position:absolute;left:0;top:215px;width:340px;height:1px;background:#C0C0C0;"></div><div class="cell" style="left:0px;top:198px;width:24px;height:17px;line-height:19px;color:#000;"><span style="position:absolute;right:4px;top:0">11</span></div><div class="cell" style="left:25px;top:198px;width:22px;height:17px;line-height:19px;color:#000;"><span style="position:absolute;right:2px;top:0">6</span></div><div class="cell" style="left:48px;top:198px;width:80px;height:17px;line-height:19px;color:#000;padding-left:2px;">Fly</div><div class="cell" style="left:129px;top:198px;width:36px;height:17px;line-height:19px;color:#000;"><span style="position:absolute;right:3px;top:0">24646</span></div><div class="cell" style="left:166px;top:198px;width:58px;height:17px;line-height:19px;color:#000;"><span style="position:absolute;right:3px;top:0">37964</span></div><div class="cell" style="left:225px;top:198px;width:58px;height:17px;line-height:19px;color:#000;"><span style="position:absolute;right:3px;top:0">77334</span></div><div class="cell" style="left:284px;top:198px;width:47px;height:17px;line-height:19px;color:#000;"><span style="position:absolute;right:3px;top:0">39370</span></div><div style="position:absolute;left:0;top:233px;width:340px;height:1px;background:#C0C0C0;"></div><div class="cell" style="left:0px;top:216px;width:24px;height:17px;line-height:19px;color:#000;"><span style="position:absolute;right:4px;top:0">12</span></div><div class="cell" style="left:25px;top:216px;width:22px;height:17px;line-height:19px;color:#000;"><span style="position:absolute;right:2px;top:0">274</span></div><div class="cell" style="left:48px;top:216px;width:80px;height:17px;line-height:19px;color:#000;padding-left:2px;">Prokap4uk</div><div class="cell" style="left:129px;top:216px;width:36px;height:17px;line-height:19px;color:#000;"><span style="position:absolute;right:3px;top:0">35444</span></div><div class="cell" style="left:166px;top:216px;width:58px;height:17px;line-height:19px;color:#000;"><span style="position:absolute;right:3px;top:0">43035</span></div><div class="cell" style="left:225px;top:216px;width:58px;height:17px;line-height:19px;color:#000;"><span style="position:absolute;right:3px;top:0">89018</span></div><div class="cell" style="left:284px;top:216px;width:47px;height:17px;line-height:19px;color:#000;"><span style="position:absolute;right:3px;top:0">45983</span></div><div style="position:absolute;left:0;top:251px;width:340px;height:1px;background:#C0C0C0;"></div><div class="cell" style="left:0px;top:234px;width:24px;height:17px;line-height:19px;color:#000;"><span style="position:absolute;right:4px;top:0">13</span></div><div class="cell" style="left:25px;top:234px;width:22px;height:17px;line-height:19px;color:#000;"><span style="position:absolute;right:2px;top:0">272</span></div><div class="cell" style="left:48px;top:234px;width:80px;height:17px;line-height:19px;color:#000;padding-left:2px;">Volkov</div><div class="cell" style="left:129px;top:234px;width:36px;height:17px;line-height:19px;color:#000;"><span style="position:absolute;right:3px;top:0">30408</span></div><div class="cell" style="left:166px;top:234px;width:58px;height:17px;line-height:19px;color:#000;"><span style="position:absolute;right:3px;top:0">43593</span></div><div class="cell" style="left:225px;top:234px;width:58px;height:17px;line-height:19px;color:#000;"><span style="position:absolute;right:3px;top:0">82268</span></div><div class="cell" style="left:284px;top:234px;width:47px;height:17px;line-height:19px;color:#000;"><span style="position:absolute;right:3px;top:0">38675</span></div><div style="position:absolute;left:0;top:269px;width:340px;height:1px;background:#C0C0C0;"></div><div class="cell" style="left:0px;top:252px;width:24px;height:17px;line-height:19px;color:#000;"><span style="position:absolute;right:4px;top:0">14</span></div><div class="cell" style="left:25px;top:252px;width:22px;height:17px;line-height:19px;color:#000;"><span style="position:absolute;right:2px;top:0">273</span></div><div class="cell" style="left:48px;top:252px;width:80px;height:17px;line-height:19px;color:#000;padding-left:2px;">andrap</div><div class="cell" style="left:129px;top:252px;width:36px;height:17px;line-height:19px;color:#000;"><span style="position:absolute;right:3px;top:0">25330</span></div><div class="cell" style="left:166px;top:252px;width:58px;height:17px;line-height:19px;color:#000;"><span style="position:absolute;right:3px;top:0">46697</span></div><div class="cell" style="left:225px;top:252px;width:58px;height:17px;line-height:19px;color:#000;"><span style="position:absolute;right:3px;top:0">82546</span></div><div class="cell" style="left:284px;top:252px;width:47px;height:17px;line-height:19px;color:#000;"><span style="position:absolute;right:3px;top:0">35849</span></div><div style="position:absolute;left:0;top:287px;width:340px;height:1px;background:#C0C0C0;"></div><div class="cell" style="left:0px;top:270px;width:24px;height:17px;line-height:19px;color:#000;"><span style="position:absolute;right:4px;top:0">15</span></div><div class="cell" style="left:25px;top:270px;width:22px;height:17px;line-height:19px;color:#000;"><span style="position:absolute;right:2px;top:0">260</span></div><div class="cell" style="left:48px;top:270px;width:80px;height:17px;line-height:19px;color:#000;padding-left:2px;">Misha</div><div class="cell" style="left:129px;top:270px;width:36px;height:17px;line-height:19px;color:#000;"><span style="position:absolute;right:3px;top:0">33101</span></div><div class="cell" style="left:166px;top:270px;width:58px;height:17px;line-height:19px;color:#000;"><span style="position:absolute;right:3px;top:0">52848</span></div><div class="cell" style="left:225px;top:270px;width:58px;height:17px;line-height:19px;color:#000;"><span style="position:absolute;right:3px;top:0">92358</span></div><div class="cell" style="left:284px;top:270px;width:47px;height:17px;line-height:19px;color:#000;"><span style="position:absolute;right:3px;top:0">39510</span></div><div style="position:absolute;left:24px;top:18px;width:1px;height:270px;background:#C0C0C0;"></div><div style="position:absolute;left:47px;top:18px;width:1px;height:270px;background:#C0C0C0;"></div><div style="position:absolute;left:128px;top:18px;width:1px;height:270px;background:#C0C0C0;"></div><div style="position:absolute;left:165px;top:18px;width:1px;height:270px;background:#C0C0C0;"></div><div style="position:absolute;left:224px;top:18px;width:1px;height:270px;background:#C0C0C0;"></div><div style="position:absolute;left:283px;top:18px;width:1px;height:270px;background:#C0C0C0;"></div></div>
<div style="position:absolute;left:639px;top:412px;width:17px;height:307px;background:linear-gradient(90deg,#EEF2FA,#FBFCFE);"></div>
<div style="position:absolute;left:639px;top:413px;width:17px;height:17px;border:1px solid #9EB2D8;border-radius:2px;background:linear-gradient(#FFFFFF,#E6EEFA 35%,#C4D4EC 80%,#B4C6E2);box-shadow:inset 0 0 0 1px rgba(255,255,255,0.6);"><svg width="15" height="15" style="position:absolute;left:0px;top:0px"><path d="M4 9.5 L7.5 6 L11 9.5" stroke="#4A5468" stroke-width="2" fill="none"/></svg></div>
<div style="position:absolute;left:639px;top:459px;width:17px;height:140px;border:1px solid #B4C8F0;border-radius:2px;background:linear-gradient(90deg,#C8DAF6,#DDE8FA 50%,#C8DAF6);"></div>
<svg width="9" height="8" style="position:absolute;left:643px;top:523px"><path d="M1 1.5 H8 M1 3.5 H8 M1 5.5 H8 M1 7.5 H8" stroke="#8CA4D0" stroke-width="1"/></svg>
<div style="position:absolute;left:639px;top:702px;width:17px;height:17px;border:1px solid #9EB2D8;border-radius:2px;background:linear-gradient(#FFFFFF,#E6EEFA 35%,#C4D4EC 80%,#B4C6E2);box-shadow:inset 0 0 0 1px rgba(255,255,255,0.6);"><svg width="15" height="15" style="position:absolute;left:0px;top:0px"><path d="M4 6 L7.5 9.5 L11 6" stroke="#4A5468" stroke-width="2" fill="none"/></svg></div>
<div style="position:absolute;left:315px;top:719px;width:324px;height:18px;background:linear-gradient(#EEF2FA,#FBFCFE);"></div>
<div style="position:absolute;left:315px;top:720px;width:17px;height:16px;border:1px solid #9EB2D8;border-radius:2px;background:linear-gradient(#FFFFFF,#E6EEFA 35%,#C4D4EC 80%,#B4C6E2);box-shadow:inset 0 0 0 1px rgba(255,255,255,0.6);"><svg width="15" height="15" style="position:absolute;left:0px;top:-1px"><path d="M9.5 4 L6 7.5 L9.5 11" stroke="#4A5468" stroke-width="2" fill="none"/></svg></div>
<div style="position:absolute;left:332px;top:720px;width:17px;height:16px;border:1px solid #B4C8F0;border-radius:2px;background:linear-gradient(#DDE8FA,#C8DAF6);"></div>
<svg width="8" height="9" style="position:absolute;left:336px;top:724px"><path d="M1.5 1 V8 M3.5 1 V8 M5.5 1 V8 M7.5 1 V8" stroke="#8CA4D0" stroke-width="1"/></svg>
<div style="position:absolute;left:621px;top:720px;width:18px;height:16px;border:1px solid #9EB2D8;border-radius:2px;background:linear-gradient(#FFFFFF,#E6EEFA 35%,#C4D4EC 80%,#B4C6E2);box-shadow:inset 0 0 0 1px rgba(255,255,255,0.6);"><svg width="15" height="15" style="position:absolute;left:0px;top:-1px"><path d="M6 4 L9.5 7.5 L6 11" stroke="#4A5468" stroke-width="2" fill="none"/></svg></div>
<div style="position:absolute;left:639px;top:719px;width:17px;height:18px;background:#ECE9EC;"></div>
<div style="position:absolute;left:657px;top:411px;width:614px;height:327px;border:1px solid #000;background:#FFFFFF;"></div>
<div style="position:absolute;left:658px;top:412px;width:596px;height:325px;overflow:hidden;"><div style="position:absolute;left:1px;top:1px;width:512px;height:16px;background:#ECE9EC;"></div><div style="position:absolute;left:0;top:17px;width:513px;height:1px;background:#000;"></div><div style="position:absolute;left:512px;top:0;width:1px;height:18px;background:#000;"></div><div class="cell" style="left:1px;top:0;width:26px;height:17px;line-height:19px;font-weight:bold;letter-spacing:0;text-align:left;padding-left:3px;">№</div><div class="cell" style="left:28px;top:0;width:58px;height:17px;line-height:19px;font-weight:normal;letter-spacing:-0.5px;text-align:left;padding-left:3px;">Группа</div><div style="position:absolute;left:27px;top:0;width:1px;height:17px;background:#000;"></div><div class="cell" style="left:87px;top:0;width:75px;height:17px;line-height:19px;font-weight:bold;letter-spacing:0;text-align:left;padding-left:3px;">Наименов...</div><div style="position:absolute;left:86px;top:0;width:1px;height:17px;background:#000;"></div><div class="cell" style="left:163px;top:0;width:50px;height:17px;line-height:19px;font-weight:normal;letter-spacing:-0.5px;text-align:left;padding-left:3px;">ПОСТА...</div><div style="position:absolute;left:162px;top:0;width:1px;height:17px;background:#000;"></div><div class="cell" style="left:214px;top:0;width:32px;height:17px;line-height:19px;font-weight:bold;letter-spacing:0;text-align:left;padding-left:3px;">Кол.</div><div style="position:absolute;left:213px;top:0;width:1px;height:17px;background:#000;"></div><div class="cell" style="left:247px;top:0;width:50px;height:17px;line-height:19px;font-weight:normal;letter-spacing:-0.5px;text-align:center;">закупка</div><div style="position:absolute;left:246px;top:0;width:1px;height:17px;background:#000;"></div><div class="cell" style="left:298px;top:0;width:48px;height:17px;line-height:19px;font-weight:normal;letter-spacing:-0.5px;text-align:center;">Прода...</div><div style="position:absolute;left:297px;top:0;width:1px;height:17px;background:#000;"></div><div class="cell" style="left:347px;top:0;width:32px;height:17px;line-height:19px;font-weight:normal;letter-spacing:-0.5px;text-align:left;padding-left:3px;">Ме...</div><div style="position:absolute;left:346px;top:0;width:1px;height:17px;background:#000;"></div><div class="cell" style="left:380px;top:0;width:34px;height:17px;line-height:19px;font-weight:bold;letter-spacing:0;text-align:left;padding-left:3px;">сост.</div><div style="position:absolute;left:379px;top:0;width:1px;height:17px;background:#000;"></div><div class="cell" style="left:415px;top:0;width:32px;height:17px;line-height:19px;font-weight:bold;letter-spacing:0;text-align:left;padding-left:3px;">Пр...</div><div style="position:absolute;left:414px;top:0;width:1px;height:17px;background:#000;"></div><div class="cell" style="left:448px;top:0;width:64px;height:17px;line-height:19px;font-weight:bold;letter-spacing:0;text-align:left;padding-left:3px;">Оплата</div><div style="position:absolute;left:447px;top:0;width:1px;height:17px;background:#000;"></div><div style="position:absolute;left:1px;top:18px;width:511px;height:17px;background:#3162AC;"></div><div style="position:absolute;left:1px;top:35px;width:512px;height:1px;background:#C0C0C0;"></div><div class="cell" style="left:1px;top:18px;width:26px;height:17px;line-height:19px;color:#FFFFFF;font-weight:normal;letter-spacing:-0.5px;"><span style="position:absolute;right:3px;top:0">2784</span></div><div class="cell" style="left:28px;top:18px;width:58px;height:17px;line-height:19px;color:#FFFFFF;font-weight:normal;letter-spacing:-0.5px;padding-left:2px;">Масляные радиаторы</div><div class="cell" style="left:87px;top:18px;width:75px;height:17px;line-height:19px;color:#FFFFFF;font-weight:normal;letter-spacing:-0.5px;padding-left:2px;">Delonghi TRS V 0715</div><div class="cell" style="left:163px;top:18px;width:50px;height:17px;line-height:19px;color:#FFFFFF;font-weight:normal;letter-spacing:-0.5px;padding-left:2px;">Domotexnika</div><div class="cell" style="left:214px;top:18px;width:32px;height:17px;line-height:19px;color:#FFFFFF;font-weight:normal;letter-spacing:-0.5px;"><span style="position:absolute;right:3px;top:0">1</span></div><div class="cell" style="left:247px;top:18px;width:50px;height:17px;line-height:19px;color:#FFFFFF;font-weight:normal;letter-spacing:-0.5px;text-align:center;">130</div><div class="cell" style="left:298px;top:18px;width:48px;height:17px;line-height:19px;color:#FFFFFF;font-weight:normal;letter-spacing:-0.5px;text-align:center;">133,65</div><div class="cell" style="left:347px;top:18px;width:32px;height:17px;line-height:19px;color:#FFFFFF;font-weight:normal;letter-spacing:-0.5px;padding-left:2px;">Fly</div><div class="cell" style="left:380px;top:18px;width:34px;height:17px;line-height:19px;color:#FFFFFF;font-weight:normal;letter-spacing:-0.5px;padding-left:2px;">Доставлено</div><div class="cell" style="left:415px;top:18px;width:32px;height:17px;line-height:19px;color:#FFFFFF;font-weight:normal;letter-spacing:-0.5px;padding-left:2px;">23.04.2010</div><div class="cell" style="left:448px;top:18px;width:64px;height:17px;line-height:19px;color:#FFFFFF;font-weight:normal;letter-spacing:-0.5px;"><span style="position:absolute;right:3px;top:0">140</span></div><div style="position:absolute;left:1px;top:36px;width:511px;height:17px;background:#C8FFC8;"></div><div style="position:absolute;left:1px;top:53px;width:512px;height:1px;background:#C0C0C0;"></div><div class="cell" style="left:1px;top:36px;width:26px;height:17px;line-height:19px;color:#000;font-weight:normal;letter-spacing:-0.5px;"><span style="position:absolute;right:3px;top:0">3027</span></div><div class="cell" style="left:28px;top:36px;width:58px;height:17px;line-height:19px;color:#000;font-weight:normal;letter-spacing:-0.5px;padding-left:2px;">Принтеры</div><div class="cell" style="left:87px;top:36px;width:75px;height:17px;line-height:19px;color:#000;font-weight:normal;letter-spacing:-0.5px;padding-left:2px;">HP LaserJet P1005</div><div class="cell" style="left:163px;top:36px;width:50px;height:17px;line-height:19px;color:#000;font-weight:normal;letter-spacing:-0.5px;padding-left:2px;">Комел</div><div class="cell" style="left:214px;top:36px;width:32px;height:17px;line-height:19px;color:#000;font-weight:normal;letter-spacing:-0.5px;"><span style="position:absolute;right:3px;top:0">1</span></div><div class="cell" style="left:247px;top:36px;width:50px;height:17px;line-height:19px;color:#000;font-weight:normal;letter-spacing:-0.5px;text-align:center;">135</div><div class="cell" style="left:298px;top:36px;width:48px;height:17px;line-height:19px;color:#000;font-weight:normal;letter-spacing:-0.5px;text-align:center;">126</div><div class="cell" style="left:347px;top:36px;width:32px;height:17px;line-height:19px;color:#000;font-weight:normal;letter-spacing:-0.5px;padding-left:2px;">Fly</div><div class="cell" style="left:380px;top:36px;width:34px;height:17px;line-height:19px;color:#000;font-weight:normal;letter-spacing:-0.5px;padding-left:2px;">Доставлено</div><div class="cell" style="left:415px;top:36px;width:32px;height:17px;line-height:19px;color:#000;font-weight:normal;letter-spacing:-0.5px;padding-left:2px;">02.04.2010</div><div class="cell" style="left:448px;top:36px;width:64px;height:17px;line-height:19px;color:#000;font-weight:normal;letter-spacing:-0.5px;"><span style="position:absolute;right:3px;top:0">126</span></div><div style="position:absolute;left:1px;top:54px;width:511px;height:17px;background:#C8FFC8;"></div><div style="position:absolute;left:1px;top:71px;width:512px;height:1px;background:#C0C0C0;"></div><div class="cell" style="left:1px;top:54px;width:26px;height:17px;line-height:19px;color:#000;font-weight:normal;letter-spacing:-0.5px;"><span style="position:absolute;right:3px;top:0">3568</span></div><div class="cell" style="left:28px;top:54px;width:58px;height:17px;line-height:19px;color:#000;font-weight:normal;letter-spacing:-0.5px;padding-left:2px;">Климатическая техника</div><div class="cell" style="left:87px;top:54px;width:75px;height:17px;line-height:19px;color:#000;font-weight:normal;letter-spacing:-0.5px;padding-left:2px;">Ufo ножка телескоп</div><div class="cell" style="left:163px;top:54px;width:50px;height:17px;line-height:19px;color:#000;font-weight:normal;letter-spacing:-0.5px;padding-left:2px;">АКУСТИКА</div><div class="cell" style="left:214px;top:54px;width:32px;height:17px;line-height:19px;color:#000;font-weight:normal;letter-spacing:-0.5px;"><span style="position:absolute;right:3px;top:0">1</span></div><div class="cell" style="left:247px;top:54px;width:50px;height:17px;line-height:19px;color:#000;font-weight:normal;letter-spacing:-0.5px;text-align:center;">22,75</div><div class="cell" style="left:298px;top:54px;width:48px;height:17px;line-height:19px;color:#000;font-weight:normal;letter-spacing:-0.5px;text-align:center;">10</div><div class="cell" style="left:347px;top:54px;width:32px;height:17px;line-height:19px;color:#000;font-weight:normal;letter-spacing:-0.5px;padding-left:2px;">Misha</div><div class="cell" style="left:380px;top:54px;width:34px;height:17px;line-height:19px;color:#000;font-weight:normal;letter-spacing:-0.5px;padding-left:2px;">Доставлено</div><div class="cell" style="left:415px;top:54px;width:32px;height:17px;line-height:19px;color:#000;font-weight:normal;letter-spacing:-0.5px;padding-left:2px;">22.04.2010</div><div class="cell" style="left:448px;top:54px;width:64px;height:17px;line-height:19px;color:#000;font-weight:normal;letter-spacing:-0.5px;"><span style="position:absolute;right:3px;top:0">10</span></div><div style="position:absolute;left:1px;top:72px;width:511px;height:17px;background:#C8FFC8;"></div><div style="position:absolute;left:1px;top:89px;width:512px;height:1px;background:#C0C0C0;"></div><div class="cell" style="left:1px;top:72px;width:26px;height:17px;line-height:19px;color:#000;font-weight:normal;letter-spacing:-0.5px;"><span style="position:absolute;right:3px;top:0">3569</span></div><div class="cell" style="left:28px;top:72px;width:58px;height:17px;line-height:19px;color:#000;font-weight:normal;letter-spacing:-0.5px;padding-left:2px;">Климатическая техника</div><div class="cell" style="left:87px;top:72px;width:75px;height:17px;line-height:19px;color:#000;font-weight:normal;letter-spacing:-0.5px;padding-left:2px;">Ufo ножка телескоп</div><div class="cell" style="left:163px;top:72px;width:50px;height:17px;line-height:19px;color:#000;font-weight:normal;letter-spacing:-0.5px;padding-left:2px;">АКУСТИКА</div><div class="cell" style="left:214px;top:72px;width:32px;height:17px;line-height:19px;color:#000;font-weight:normal;letter-spacing:-0.5px;"><span style="position:absolute;right:3px;top:0">1</span></div><div class="cell" style="left:247px;top:72px;width:50px;height:17px;line-height:19px;color:#000;font-weight:normal;letter-spacing:-0.5px;text-align:center;">22,75</div><div class="cell" style="left:298px;top:72px;width:48px;height:17px;line-height:19px;color:#000;font-weight:normal;letter-spacing:-0.5px;text-align:center;">10</div><div class="cell" style="left:347px;top:72px;width:32px;height:17px;line-height:19px;color:#000;font-weight:normal;letter-spacing:-0.5px;padding-left:2px;">Misha</div><div class="cell" style="left:380px;top:72px;width:34px;height:17px;line-height:19px;color:#000;font-weight:normal;letter-spacing:-0.5px;padding-left:2px;">Доставлено</div><div class="cell" style="left:415px;top:72px;width:32px;height:17px;line-height:19px;color:#000;font-weight:normal;letter-spacing:-0.5px;padding-left:2px;">22.04.2010</div><div class="cell" style="left:448px;top:72px;width:64px;height:17px;line-height:19px;color:#000;font-weight:normal;letter-spacing:-0.5px;"><span style="position:absolute;right:3px;top:0">10</span></div><div style="position:absolute;left:1px;top:90px;width:511px;height:17px;background:#C8FFC8;"></div><div style="position:absolute;left:1px;top:107px;width:512px;height:1px;background:#C0C0C0;"></div><div class="cell" style="left:1px;top:90px;width:26px;height:17px;line-height:19px;color:#000;font-weight:normal;letter-spacing:-0.5px;"><span style="position:absolute;right:3px;top:0">4718</span></div><div class="cell" style="left:28px;top:90px;width:58px;height:17px;line-height:19px;color:#000;font-weight:normal;letter-spacing:-0.5px;padding-left:2px;">Вытяжки</div><div class="cell" style="left:87px;top:90px;width:75px;height:17px;line-height:19px;color:#000;font-weight:normal;letter-spacing:-0.5px;padding-left:2px;">Pyramida WH 1</div><div class="cell" style="left:163px;top:90px;width:50px;height:17px;line-height:19px;color:#000;font-weight:normal;letter-spacing:-0.5px;padding-left:2px;">АКУСТИКА</div><div class="cell" style="left:214px;top:90px;width:32px;height:17px;line-height:19px;color:#000;font-weight:normal;letter-spacing:-0.5px;"><span style="position:absolute;right:3px;top:0">1</span></div><div class="cell" style="left:247px;top:90px;width:50px;height:17px;line-height:19px;color:#000;font-weight:normal;letter-spacing:-0.5px;text-align:center;">50</div><div class="cell" style="left:298px;top:90px;width:48px;height:17px;line-height:19px;color:#000;font-weight:normal;letter-spacing:-0.5px;text-align:center;">50</div><div class="cell" style="left:347px;top:90px;width:32px;height:17px;line-height:19px;color:#000;font-weight:normal;letter-spacing:-0.5px;padding-left:2px;">Misha</div><div class="cell" style="left:380px;top:90px;width:34px;height:17px;line-height:19px;color:#000;font-weight:normal;letter-spacing:-0.5px;padding-left:2px;">Доставлено</div><div class="cell" style="left:415px;top:90px;width:32px;height:17px;line-height:19px;color:#000;font-weight:normal;letter-spacing:-0.5px;padding-left:2px;">13.04.2010</div><div class="cell" style="left:448px;top:90px;width:64px;height:17px;line-height:19px;color:#000;font-weight:normal;letter-spacing:-0.5px;"><span style="position:absolute;right:3px;top:0">64</span></div><div style="position:absolute;left:1px;top:108px;width:511px;height:17px;background:#FFFFD0;"></div><div style="position:absolute;left:1px;top:125px;width:512px;height:1px;background:#C0C0C0;"></div><div class="cell" style="left:1px;top:108px;width:26px;height:17px;line-height:19px;color:#000;font-weight:normal;letter-spacing:-0.5px;"><span style="position:absolute;right:3px;top:0">5388</span></div><div class="cell" style="left:28px;top:108px;width:58px;height:17px;line-height:19px;color:#000;font-weight:normal;letter-spacing:-0.5px;padding-left:2px;">Вентиляторы</div><div class="cell" style="left:87px;top:108px;width:75px;height:17px;line-height:19px;color:#000;font-weight:normal;letter-spacing:-0.5px;padding-left:2px;">Delfa&nbsp; HFS 16 N</div><div class="cell" style="left:163px;top:108px;width:50px;height:17px;line-height:19px;color:#000;font-weight:normal;letter-spacing:-0.5px;padding-left:2px;">Fox Гостомель</div><div class="cell" style="left:214px;top:108px;width:32px;height:17px;line-height:19px;color:#000;font-weight:normal;letter-spacing:-0.5px;"><span style="position:absolute;right:3px;top:0">1</span></div><div class="cell" style="left:247px;top:108px;width:50px;height:17px;line-height:19px;color:#000;font-weight:normal;letter-spacing:-0.5px;text-align:center;">26</div><div class="cell" style="left:298px;top:108px;width:48px;height:17px;line-height:19px;color:#000;font-weight:normal;letter-spacing:-0.5px;text-align:center;">30</div><div class="cell" style="left:347px;top:108px;width:32px;height:17px;line-height:19px;color:#000;font-weight:normal;letter-spacing:-0.5px;padding-left:2px;">Volkov</div><div class="cell" style="left:380px;top:108px;width:34px;height:17px;line-height:19px;color:#000;font-weight:normal;letter-spacing:-0.5px;padding-left:2px;">На складе</div><div class="cell" style="left:415px;top:108px;width:32px;height:17px;line-height:19px;color:#000;font-weight:normal;letter-spacing:-0.5px;padding-left:2px;">19.04.2010</div><div class="cell" style="left:448px;top:108px;width:64px;height:17px;line-height:19px;color:#000;font-weight:normal;letter-spacing:-0.5px;"><span style="position:absolute;right:3px;top:0"></span></div><div style="position:absolute;left:1px;top:126px;width:511px;height:17px;background:#E8FFE8;"></div><div style="position:absolute;left:1px;top:143px;width:512px;height:1px;background:#C0C0C0;"></div><div class="cell" style="left:1px;top:126px;width:26px;height:17px;line-height:19px;color:#C00000;font-weight:normal;letter-spacing:-0.5px;"><span style="position:absolute;right:3px;top:0">7370</span></div><div class="cell" style="left:28px;top:126px;width:58px;height:17px;line-height:19px;color:#C00000;font-weight:normal;letter-spacing:-0.5px;padding-left:2px;">Plasma 37-42</div><div class="cell" style="left:87px;top:126px;width:75px;height:17px;line-height:19px;color:#C00000;font-weight:normal;letter-spacing:-0.5px;padding-left:2px;">LG 42PQ6000 Z</div><div class="cell" style="left:163px;top:126px;width:50px;height:17px;line-height:19px;color:#C00000;font-weight:normal;letter-spacing:-0.5px;padding-left:2px;">АКУСТИКА</div><div class="cell" style="left:214px;top:126px;width:32px;height:17px;line-height:19px;color:#C00000;font-weight:normal;letter-spacing:-0.5px;"><span style="position:absolute;right:3px;top:0">1</span></div><div class="cell" style="left:247px;top:126px;width:50px;height:17px;line-height:19px;color:#C00000;font-weight:normal;letter-spacing:-0.5px;text-align:center;">769</div><div class="cell" style="left:298px;top:126px;width:48px;height:17px;line-height:19px;color:#C00000;font-weight:normal;letter-spacing:-0.5px;text-align:center;">770</div><div class="cell" style="left:347px;top:126px;width:32px;height:17px;line-height:19px;color:#C00000;font-weight:normal;letter-spacing:-0.5px;padding-left:2px;">Kostya Sklad</div><div class="cell" style="left:380px;top:126px;width:34px;height:17px;line-height:19px;color:#C00000;font-weight:normal;letter-spacing:-0.5px;padding-left:2px;">Возврат</div><div class="cell" style="left:415px;top:126px;width:32px;height:17px;line-height:19px;color:#C00000;font-weight:normal;letter-spacing:-0.5px;padding-left:2px;">13.04.2010</div><div class="cell" style="left:448px;top:126px;width:64px;height:17px;line-height:19px;color:#C00000;font-weight:normal;letter-spacing:-0.5px;"><span style="position:absolute;right:3px;top:0"></span></div><div style="position:absolute;left:1px;top:144px;width:511px;height:17px;background:#C8FFC8;"></div><div style="position:absolute;left:1px;top:161px;width:512px;height:1px;background:#C0C0C0;"></div><div class="cell" style="left:1px;top:144px;width:26px;height:17px;line-height:19px;color:#000;font-weight:normal;letter-spacing:-0.5px;"><span style="position:absolute;right:3px;top:0">7383</span></div><div class="cell" style="left:28px;top:144px;width:58px;height:17px;line-height:19px;color:#000;font-weight:normal;letter-spacing:-0.5px;padding-left:2px;">МП3</div><div class="cell" style="left:87px;top:144px;width:75px;height:17px;line-height:19px;color:#000;font-weight:normal;letter-spacing:-0.5px;padding-left:2px;">Ergo ZEN Little</div><div class="cell" style="left:163px;top:144px;width:50px;height:17px;line-height:19px;color:#000;font-weight:normal;letter-spacing:-0.5px;padding-left:2px;">АКУСТИКА</div><div class="cell" style="left:214px;top:144px;width:32px;height:17px;line-height:19px;color:#000;font-weight:normal;letter-spacing:-0.5px;"><span style="position:absolute;right:3px;top:0">1</span></div><div class="cell" style="left:247px;top:144px;width:50px;height:17px;line-height:19px;color:#000;font-weight:normal;letter-spacing:-0.5px;text-align:center;">19</div><div class="cell" style="left:298px;top:144px;width:48px;height:17px;line-height:19px;color:#000;font-weight:normal;letter-spacing:-0.5px;text-align:center;">19,77</div><div class="cell" style="left:347px;top:144px;width:32px;height:17px;line-height:19px;color:#000;font-weight:normal;letter-spacing:-0.5px;padding-left:2px;">Virus</div><div class="cell" style="left:380px;top:144px;width:34px;height:17px;line-height:19px;color:#000;font-weight:normal;letter-spacing:-0.5px;padding-left:2px;">Доставлено</div><div class="cell" style="left:415px;top:144px;width:32px;height:17px;line-height:19px;color:#000;font-weight:normal;letter-spacing:-0.5px;padding-left:2px;">09.04.2010</div><div class="cell" style="left:448px;top:144px;width:64px;height:17px;line-height:19px;color:#000;font-weight:normal;letter-spacing:-0.5px;"><span style="position:absolute;right:3px;top:0">20</span></div><div style="position:absolute;left:1px;top:162px;width:511px;height:17px;background:#C8FFC8;"></div><div style="position:absolute;left:1px;top:179px;width:512px;height:1px;background:#C0C0C0;"></div><div class="cell" style="left:1px;top:162px;width:26px;height:17px;line-height:19px;color:#000;font-weight:normal;letter-spacing:-0.5px;"><span style="position:absolute;right:3px;top:0">7784</span></div><div class="cell" style="left:28px;top:162px;width:58px;height:17px;line-height:19px;color:#000;font-weight:normal;letter-spacing:-0.5px;padding-left:2px;">Принтеры</div><div class="cell" style="left:87px;top:162px;width:75px;height:17px;line-height:19px;color:#000;font-weight:normal;letter-spacing:-0.5px;padding-left:2px;">HP DeskJet 16</div><div class="cell" style="left:163px;top:162px;width:50px;height:17px;line-height:19px;color:#000;font-weight:normal;letter-spacing:-0.5px;padding-left:2px;">АКУСТИКА</div><div class="cell" style="left:214px;top:162px;width:32px;height:17px;line-height:19px;color:#000;font-weight:normal;letter-spacing:-0.5px;"><span style="position:absolute;right:3px;top:0">1</span></div><div class="cell" style="left:247px;top:162px;width:50px;height:17px;line-height:19px;color:#000;font-weight:normal;letter-spacing:-0.5px;text-align:center;">46</div><div class="cell" style="left:298px;top:162px;width:48px;height:17px;line-height:19px;color:#000;font-weight:normal;letter-spacing:-0.5px;text-align:center;">48</div><div class="cell" style="left:347px;top:162px;width:32px;height:17px;line-height:19px;color:#000;font-weight:normal;letter-spacing:-0.5px;padding-left:2px;">Prokap4uk</div><div class="cell" style="left:380px;top:162px;width:34px;height:17px;line-height:19px;color:#000;font-weight:normal;letter-spacing:-0.5px;padding-left:2px;">Доставлено</div><div class="cell" style="left:415px;top:162px;width:32px;height:17px;line-height:19px;color:#000;font-weight:normal;letter-spacing:-0.5px;padding-left:2px;">19.04.2010</div><div class="cell" style="left:448px;top:162px;width:64px;height:17px;line-height:19px;color:#000;font-weight:normal;letter-spacing:-0.5px;"><span style="position:absolute;right:3px;top:0">48</span></div><div style="position:absolute;left:1px;top:180px;width:511px;height:17px;background:#C8FFC8;"></div><div style="position:absolute;left:1px;top:197px;width:512px;height:1px;background:#C0C0C0;"></div><div class="cell" style="left:1px;top:180px;width:26px;height:17px;line-height:19px;color:#000;font-weight:normal;letter-spacing:-0.5px;"><span style="position:absolute;right:3px;top:0">8097</span></div><div class="cell" style="left:28px;top:180px;width:58px;height:17px;line-height:19px;color:#000;font-weight:normal;letter-spacing:-0.5px;padding-left:2px;">Радио</div><div class="cell" style="left:87px;top:180px;width:75px;height:17px;line-height:19px;color:#000;font-weight:normal;letter-spacing:-0.5px;padding-left:2px;">Sony ICF C205</div><div class="cell" style="left:163px;top:180px;width:50px;height:17px;line-height:19px;color:#000;font-weight:normal;letter-spacing:-0.5px;padding-left:2px;">MWM</div><div class="cell" style="left:214px;top:180px;width:32px;height:17px;line-height:19px;color:#000;font-weight:normal;letter-spacing:-0.5px;"><span style="position:absolute;right:3px;top:0">1</span></div><div class="cell" style="left:247px;top:180px;width:50px;height:17px;line-height:19px;color:#000;font-weight:normal;letter-spacing:-0.5px;text-align:center;">19</div><div class="cell" style="left:298px;top:180px;width:48px;height:17px;line-height:19px;color:#000;font-weight:normal;letter-spacing:-0.5px;text-align:center;">21</div><div class="cell" style="left:347px;top:180px;width:32px;height:17px;line-height:19px;color:#000;font-weight:normal;letter-spacing:-0.5px;padding-left:2px;">ZhenyaL</div><div class="cell" style="left:380px;top:180px;width:34px;height:17px;line-height:19px;color:#000;font-weight:normal;letter-spacing:-0.5px;padding-left:2px;">Доставлено</div><div class="cell" style="left:415px;top:180px;width:32px;height:17px;line-height:19px;color:#000;font-weight:normal;letter-spacing:-0.5px;padding-left:2px;">14.04.2010</div><div class="cell" style="left:448px;top:180px;width:64px;height:17px;line-height:19px;color:#000;font-weight:normal;letter-spacing:-0.5px;"><span style="position:absolute;right:3px;top:0">21</span></div><div style="position:absolute;left:1px;top:198px;width:511px;height:17px;background:#C8FFC8;"></div><div style="position:absolute;left:1px;top:215px;width:512px;height:1px;background:#C0C0C0;"></div><div class="cell" style="left:1px;top:198px;width:26px;height:17px;line-height:19px;color:#000;font-weight:bold;letter-spacing:0;"><span style="position:absolute;right:3px;top:0">8475</span></div><div class="cell" style="left:28px;top:198px;width:58px;height:17px;line-height:19px;color:#000;font-weight:bold;letter-spacing:0;padding-left:2px;">Двухкамерные</div><div class="cell" style="left:87px;top:198px;width:75px;height:17px;line-height:19px;color:#000;font-weight:bold;letter-spacing:0;padding-left:2px;">Snaige FR 240</div><div class="cell" style="left:163px;top:198px;width:50px;height:17px;line-height:19px;color:#000;font-weight:bold;letter-spacing:0;padding-left:2px;">Domotexnika</div><div class="cell" style="left:214px;top:198px;width:32px;height:17px;line-height:19px;color:#000;font-weight:bold;letter-spacing:0;"><span style="position:absolute;right:3px;top:0">1</span></div><div class="cell" style="left:247px;top:198px;width:50px;height:17px;line-height:19px;color:#000;font-weight:bold;letter-spacing:0;text-align:center;">268</div><div class="cell" style="left:298px;top:198px;width:48px;height:17px;line-height:19px;color:#000;font-weight:bold;letter-spacing:0;text-align:center;">285,62</div><div class="cell" style="left:347px;top:198px;width:32px;height:17px;line-height:19px;color:#000;font-weight:bold;letter-spacing:0;padding-left:2px;">Misha</div><div class="cell" style="left:380px;top:198px;width:34px;height:17px;line-height:19px;color:#000;font-weight:bold;letter-spacing:0;padding-left:2px;">Доставлено</div><div class="cell" style="left:415px;top:198px;width:32px;height:17px;line-height:19px;color:#000;font-weight:bold;letter-spacing:0;padding-left:2px;">21.04.2010</div><div class="cell" style="left:448px;top:198px;width:64px;height:17px;line-height:19px;color:#000;font-weight:bold;letter-spacing:0;"><span style="position:absolute;right:3px;top:0">286</span></div><div style="position:absolute;left:1px;top:216px;width:511px;height:17px;background:#C8FFC8;"></div><div style="position:absolute;left:1px;top:233px;width:512px;height:1px;background:#C0C0C0;"></div><div class="cell" style="left:1px;top:216px;width:26px;height:17px;line-height:19px;color:#000;font-weight:normal;letter-spacing:-0.5px;"><span style="position:absolute;right:3px;top:0">8946</span></div><div class="cell" style="left:28px;top:216px;width:58px;height:17px;line-height:19px;color:#000;font-weight:normal;letter-spacing:-0.5px;padding-left:2px;">Пылесосы</div><div class="cell" style="left:87px;top:216px;width:75px;height:17px;line-height:19px;color:#000;font-weight:normal;letter-spacing:-0.5px;padding-left:2px;">Samsung VC-5800</div><div class="cell" style="left:163px;top:216px;width:50px;height:17px;line-height:19px;color:#000;font-weight:normal;letter-spacing:-0.5px;padding-left:2px;">T-trade</div><div class="cell" style="left:214px;top:216px;width:32px;height:17px;line-height:19px;color:#000;font-weight:normal;letter-spacing:-0.5px;"><span style="position:absolute;right:3px;top:0">1</span></div><div class="cell" style="left:247px;top:216px;width:50px;height:17px;line-height:19px;color:#000;font-weight:normal;letter-spacing:-0.5px;text-align:center;">33</div><div class="cell" style="left:298px;top:216px;width:48px;height:17px;line-height:19px;color:#000;font-weight:normal;letter-spacing:-0.5px;text-align:center;">37</div><div class="cell" style="left:347px;top:216px;width:32px;height:17px;line-height:19px;color:#000;font-weight:normal;letter-spacing:-0.5px;padding-left:2px;">Volkov</div><div class="cell" style="left:380px;top:216px;width:34px;height:17px;line-height:19px;color:#000;font-weight:normal;letter-spacing:-0.5px;padding-left:2px;">Доставлено</div><div class="cell" style="left:415px;top:216px;width:32px;height:17px;line-height:19px;color:#000;font-weight:normal;letter-spacing:-0.5px;padding-left:2px;">06.04.2010</div><div class="cell" style="left:448px;top:216px;width:64px;height:17px;line-height:19px;color:#000;font-weight:normal;letter-spacing:-0.5px;"><span style="position:absolute;right:3px;top:0">37</span></div><div style="position:absolute;left:1px;top:234px;width:511px;height:17px;background:#C8FFC8;"></div><div style="position:absolute;left:1px;top:251px;width:512px;height:1px;background:#C0C0C0;"></div><div class="cell" style="left:1px;top:234px;width:26px;height:17px;line-height:19px;color:#000;font-weight:normal;letter-spacing:-0.5px;"><span style="position:absolute;right:3px;top:0">9065</span></div><div class="cell" style="left:28px;top:234px;width:58px;height:17px;line-height:19px;color:#000;font-weight:normal;letter-spacing:-0.5px;padding-left:2px;">Пароварки</div><div class="cell" style="left:87px;top:234px;width:75px;height:17px;line-height:19px;color:#000;font-weight:normal;letter-spacing:-0.5px;padding-left:2px;">Tefal&nbsp; VS 4001</div><div class="cell" style="left:163px;top:234px;width:50px;height:17px;line-height:19px;color:#000;font-weight:normal;letter-spacing:-0.5px;padding-left:2px;">MWM</div><div class="cell" style="left:214px;top:234px;width:32px;height:17px;line-height:19px;color:#000;font-weight:normal;letter-spacing:-0.5px;"><span style="position:absolute;right:3px;top:0">1</span></div><div class="cell" style="left:247px;top:234px;width:50px;height:17px;line-height:19px;color:#000;font-weight:normal;letter-spacing:-0.5px;text-align:center;">152</div><div class="cell" style="left:298px;top:234px;width:48px;height:17px;line-height:19px;color:#000;font-weight:normal;letter-spacing:-0.5px;text-align:center;">153,98</div><div class="cell" style="left:347px;top:234px;width:32px;height:17px;line-height:19px;color:#000;font-weight:normal;letter-spacing:-0.5px;padding-left:2px;">Volkov</div><div class="cell" style="left:380px;top:234px;width:34px;height:17px;line-height:19px;color:#000;font-weight:normal;letter-spacing:-0.5px;padding-left:2px;">Доставлено</div><div class="cell" style="left:415px;top:234px;width:32px;height:17px;line-height:19px;color:#000;font-weight:normal;letter-spacing:-0.5px;padding-left:2px;">01.04.2010</div><div class="cell" style="left:448px;top:234px;width:64px;height:17px;line-height:19px;color:#000;font-weight:normal;letter-spacing:-0.5px;"><span style="position:absolute;right:3px;top:0">154</span></div><div style="position:absolute;left:1px;top:252px;width:511px;height:17px;background:#FFD0E8;"></div><div style="position:absolute;left:1px;top:269px;width:512px;height:1px;background:#C0C0C0;"></div><div class="cell" style="left:1px;top:252px;width:26px;height:17px;line-height:19px;color:#000;font-weight:bold;letter-spacing:0;"><span style="position:absolute;right:3px;top:0">9096</span></div><div class="cell" style="left:28px;top:252px;width:58px;height:17px;line-height:19px;color:#000;font-weight:bold;letter-spacing:0;padding-left:2px;">Утюги</div><div class="cell" style="left:87px;top:252px;width:75px;height:17px;line-height:19px;color:#000;font-weight:bold;letter-spacing:0;padding-left:2px;">Philips GC-2520</div><div class="cell" style="left:163px;top:252px;width:50px;height:17px;line-height:19px;color:#000;font-weight:bold;letter-spacing:0;padding-left:2px;">MWM</div><div class="cell" style="left:214px;top:252px;width:32px;height:17px;line-height:19px;color:#000;font-weight:bold;letter-spacing:0;"><span style="position:absolute;right:3px;top:0">1</span></div><div class="cell" style="left:247px;top:252px;width:50px;height:17px;line-height:19px;color:#000;font-weight:bold;letter-spacing:0;text-align:center;">36,9</div><div class="cell" style="left:298px;top:252px;width:48px;height:17px;line-height:19px;color:#000;font-weight:bold;letter-spacing:0;text-align:center;">38</div><div class="cell" style="left:347px;top:252px;width:32px;height:17px;line-height:19px;color:#000;font-weight:bold;letter-spacing:0;padding-left:2px;">Сергей</div><div class="cell" style="left:380px;top:252px;width:34px;height:17px;line-height:19px;color:#000;font-weight:bold;letter-spacing:0;padding-left:2px;">СПИСАНО</div><div class="cell" style="left:415px;top:252px;width:32px;height:17px;line-height:19px;color:#000;font-weight:bold;letter-spacing:0;padding-left:2px;">09.04.2010</div><div class="cell" style="left:448px;top:252px;width:64px;height:17px;line-height:19px;color:#000;font-weight:bold;letter-spacing:0;"><span style="position:absolute;right:3px;top:0"></span></div><div style="position:absolute;left:1px;top:270px;width:511px;height:17px;background:#C8FFC8;"></div><div style="position:absolute;left:1px;top:287px;width:512px;height:1px;background:#C0C0C0;"></div><div class="cell" style="left:1px;top:270px;width:26px;height:17px;line-height:19px;color:#000;font-weight:normal;letter-spacing:-0.5px;"><span style="position:absolute;right:3px;top:0">9218</span></div><div class="cell" style="left:28px;top:270px;width:58px;height:17px;line-height:19px;color:#000;font-weight:normal;letter-spacing:-0.5px;padding-left:2px;">СВЧ печи</div><div class="cell" style="left:87px;top:270px;width:75px;height:17px;line-height:19px;color:#000;font-weight:normal;letter-spacing:-0.5px;padding-left:2px;">Panasonic&nbsp; NN</div><div class="cell" style="left:163px;top:270px;width:50px;height:17px;line-height:19px;color:#000;font-weight:normal;letter-spacing:-0.5px;padding-left:2px;">MWM</div><div class="cell" style="left:214px;top:270px;width:32px;height:17px;line-height:19px;color:#000;font-weight:normal;letter-spacing:-0.5px;"><span style="position:absolute;right:3px;top:0">1</span></div><div class="cell" style="left:247px;top:270px;width:50px;height:17px;line-height:19px;color:#000;font-weight:normal;letter-spacing:-0.5px;text-align:center;">100,71</div><div class="cell" style="left:298px;top:270px;width:48px;height:17px;line-height:19px;color:#000;font-weight:normal;letter-spacing:-0.5px;text-align:center;">106</div><div class="cell" style="left:347px;top:270px;width:32px;height:17px;line-height:19px;color:#000;font-weight:normal;letter-spacing:-0.5px;padding-left:2px;">Женя</div><div class="cell" style="left:380px;top:270px;width:34px;height:17px;line-height:19px;color:#000;font-weight:normal;letter-spacing:-0.5px;padding-left:2px;">Доставлено</div><div class="cell" style="left:415px;top:270px;width:32px;height:17px;line-height:19px;color:#000;font-weight:normal;letter-spacing:-0.5px;padding-left:2px;">28.04.2010</div><div class="cell" style="left:448px;top:270px;width:64px;height:17px;line-height:19px;color:#000;font-weight:normal;letter-spacing:-0.5px;"><span style="position:absolute;right:3px;top:0">106</span></div><div style="position:absolute;left:1px;top:288px;width:511px;height:17px;background:#C8FFC8;"></div><div style="position:absolute;left:1px;top:305px;width:512px;height:1px;background:#C0C0C0;"></div><div class="cell" style="left:1px;top:288px;width:26px;height:17px;line-height:19px;color:#000;font-weight:normal;letter-spacing:-0.5px;"><span style="position:absolute;right:3px;top:0">9490</span></div><div class="cell" style="left:28px;top:288px;width:58px;height:17px;line-height:19px;color:#000;font-weight:normal;letter-spacing:-0.5px;padding-left:2px;">Мясорубки</div><div class="cell" style="left:87px;top:288px;width:75px;height:17px;line-height:19px;color:#000;font-weight:normal;letter-spacing:-0.5px;padding-left:2px;">Vitek VT- 1673</div><div class="cell" style="left:163px;top:288px;width:50px;height:17px;line-height:19px;color:#000;font-weight:normal;letter-spacing:-0.5px;padding-left:2px;">АКУСТИКА</div><div class="cell" style="left:214px;top:288px;width:32px;height:17px;line-height:19px;color:#000;font-weight:normal;letter-spacing:-0.5px;"><span style="position:absolute;right:3px;top:0">1</span></div><div class="cell" style="left:247px;top:288px;width:50px;height:17px;line-height:19px;color:#000;font-weight:normal;letter-spacing:-0.5px;text-align:center;">77,75</div><div class="cell" style="left:298px;top:288px;width:48px;height:17px;line-height:19px;color:#000;font-weight:normal;letter-spacing:-0.5px;text-align:center;">78</div><div class="cell" style="left:347px;top:288px;width:32px;height:17px;line-height:19px;color:#000;font-weight:normal;letter-spacing:-0.5px;padding-left:2px;">ZhenyaL</div><div class="cell" style="left:380px;top:288px;width:34px;height:17px;line-height:19px;color:#000;font-weight:normal;letter-spacing:-0.5px;padding-left:2px;">Доставлено</div><div class="cell" style="left:415px;top:288px;width:32px;height:17px;line-height:19px;color:#000;font-weight:normal;letter-spacing:-0.5px;padding-left:2px;">15.04.2010</div><div class="cell" style="left:448px;top:288px;width:64px;height:17px;line-height:19px;color:#000;font-weight:normal;letter-spacing:-0.5px;"><span style="position:absolute;right:3px;top:0">87</span></div><div style="position:absolute;left:1px;top:306px;width:511px;height:17px;background:#C8FFC8;"></div><div style="position:absolute;left:1px;top:323px;width:512px;height:1px;background:#C0C0C0;"></div><div class="cell" style="left:1px;top:306px;width:26px;height:17px;line-height:19px;color:#000;font-weight:normal;letter-spacing:-0.5px;"><span style="position:absolute;right:3px;top:0">9745</span></div><div class="cell" style="left:28px;top:306px;width:58px;height:17px;line-height:19px;color:#000;font-weight:normal;letter-spacing:-0.5px;padding-left:2px;">Пылесосы</div><div class="cell" style="left:87px;top:306px;width:75px;height:17px;line-height:19px;color:#000;font-weight:normal;letter-spacing:-0.5px;padding-left:2px;">Samsung&nbsp; VCC-</div><div class="cell" style="left:163px;top:306px;width:50px;height:17px;line-height:19px;color:#000;font-weight:normal;letter-spacing:-0.5px;padding-left:2px;">АКУСТИКА</div><div class="cell" style="left:214px;top:306px;width:32px;height:17px;line-height:19px;color:#000;font-weight:normal;letter-spacing:-0.5px;"><span style="position:absolute;right:3px;top:0">1</span></div><div class="cell" style="left:247px;top:306px;width:50px;height:17px;line-height:19px;color:#000;font-weight:normal;letter-spacing:-0.5px;text-align:center;">99,62</div><div class="cell" style="left:298px;top:306px;width:48px;height:17px;line-height:19px;color:#000;font-weight:normal;letter-spacing:-0.5px;text-align:center;">108,33</div><div class="cell" style="left:347px;top:306px;width:32px;height:17px;line-height:19px;color:#000;font-weight:normal;letter-spacing:-0.5px;padding-left:2px;">andrap</div><div class="cell" style="left:380px;top:306px;width:34px;height:17px;line-height:19px;color:#000;font-weight:normal;letter-spacing:-0.5px;padding-left:2px;">Доставлено</div><div class="cell" style="left:415px;top:306px;width:32px;height:17px;line-height:19px;color:#000;font-weight:normal;letter-spacing:-0.5px;padding-left:2px;">07.04.2010</div><div class="cell" style="left:448px;top:306px;width:64px;height:17px;line-height:19px;color:#000;font-weight:normal;letter-spacing:-0.5px;"><span style="position:absolute;right:3px;top:0">108</span></div><div style="position:absolute;left:27px;top:18px;width:1px;height:306px;background:#C0C0C0;"></div><div style="position:absolute;left:86px;top:18px;width:1px;height:306px;background:#C0C0C0;"></div><div style="position:absolute;left:162px;top:18px;width:1px;height:306px;background:#C0C0C0;"></div><div style="position:absolute;left:213px;top:18px;width:1px;height:306px;background:#C0C0C0;"></div><div style="position:absolute;left:246px;top:18px;width:1px;height:306px;background:#C0C0C0;"></div><div style="position:absolute;left:297px;top:18px;width:1px;height:306px;background:#C0C0C0;"></div><div style="position:absolute;left:346px;top:18px;width:1px;height:306px;background:#C0C0C0;"></div><div style="position:absolute;left:379px;top:18px;width:1px;height:306px;background:#C0C0C0;"></div><div style="position:absolute;left:414px;top:18px;width:1px;height:306px;background:#C0C0C0;"></div><div style="position:absolute;left:447px;top:18px;width:1px;height:306px;background:#C0C0C0;"></div><div style="position:absolute;left:512px;top:18px;width:1px;height:306px;background:#C0C0C0;"></div></div>
<div style="position:absolute;left:1254px;top:412px;width:16px;height:325px;background:linear-gradient(90deg,#EEF2FA,#FBFCFE);"></div>
<div style="position:absolute;left:1254px;top:413px;width:16px;height:17px;border:1px solid #9EB2D8;border-radius:2px;background:linear-gradient(#FFFFFF,#E6EEFA 35%,#C4D4EC 80%,#B4C6E2);box-shadow:inset 0 0 0 1px rgba(255,255,255,0.6);"><svg width="15" height="15" style="position:absolute;left:-1px;top:0px"><path d="M4 9.5 L7.5 6 L11 9.5" stroke="#4A5468" stroke-width="2" fill="none"/></svg></div>
<div style="position:absolute;left:1254px;top:430px;width:16px;height:16px;border:1px solid #B4C8F0;border-radius:2px;background:linear-gradient(90deg,#C8DAF6,#DDE8FA 50%,#C8DAF6);"></div>
<svg width="9" height="8" style="position:absolute;left:1257px;top:434px"><path d="M1 1.5 H8 M1 3.5 H8 M1 5.5 H8 M1 7.5 H8" stroke="#8CA4D0" stroke-width="1"/></svg>
<div style="position:absolute;left:1254px;top:719px;width:16px;height:17px;border:1px solid #9EB2D8;border-radius:2px;background:linear-gradient(#FFFFFF,#E6EEFA 35%,#C4D4EC 80%,#B4C6E2);box-shadow:inset 0 0 0 1px rgba(255,255,255,0.6);"><svg width="15" height="15" style="position:absolute;left:-1px;top:0px"><path d="M4 6 L7.5 9.5 L11 6" stroke="#4A5468" stroke-width="2" fill="none"/></svg></div>
</body></html>
